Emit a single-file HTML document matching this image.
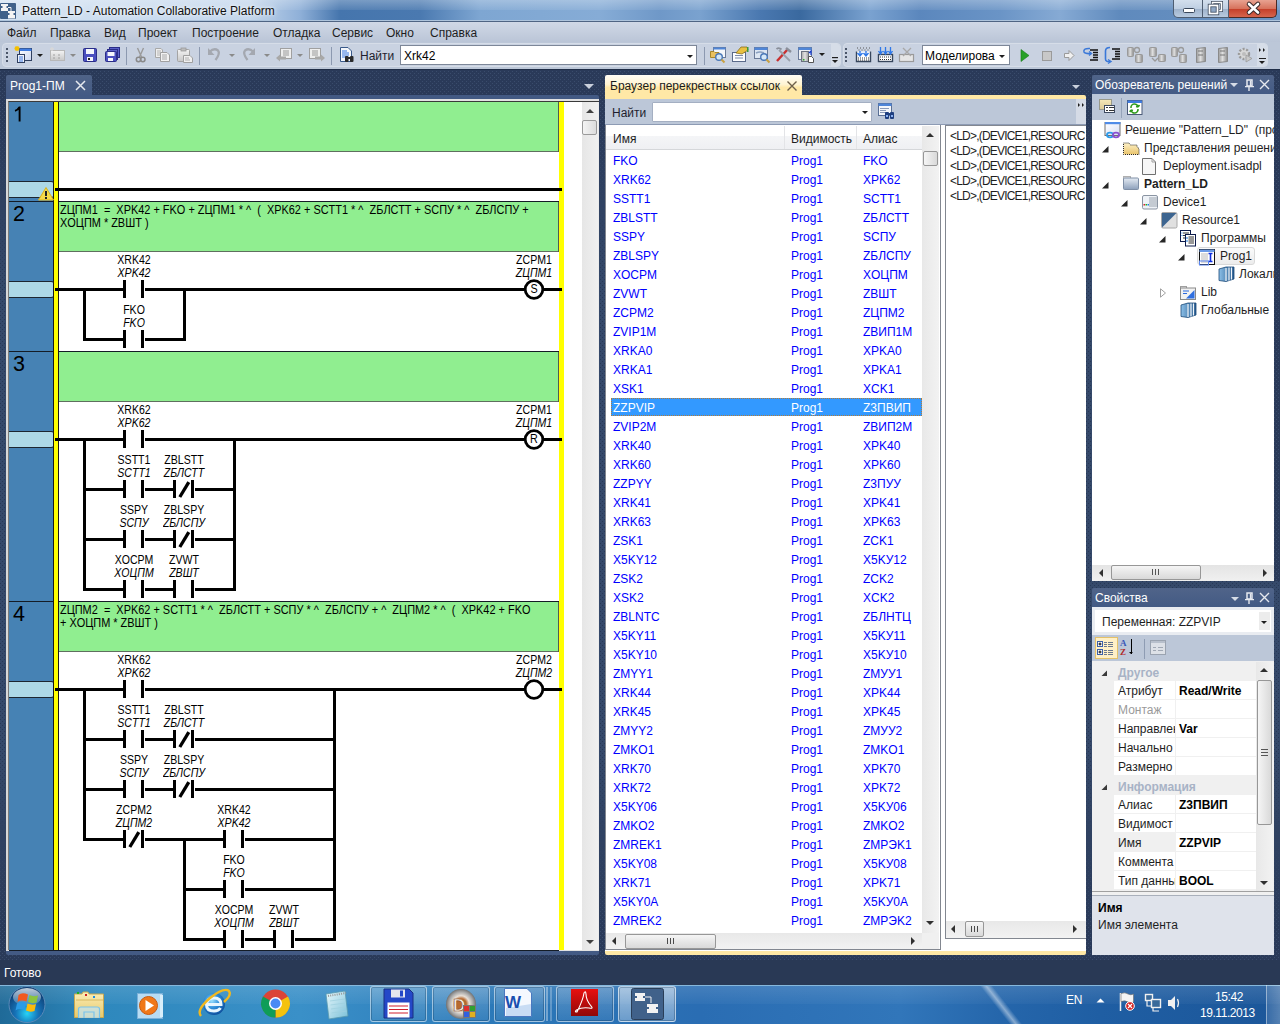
<!DOCTYPE html>
<html><head><meta charset="utf-8">
<style>
*{margin:0;padding:0;box-sizing:border-box}
html,body{width:1280px;height:1024px;overflow:hidden}
body{position:relative;font-family:"Liberation Sans",sans-serif;font-size:12px;color:#000;
background-color:#2a3a59;
background-image:conic-gradient(from 0deg at 1px 1px,transparent 0 270deg,#3a4c6c 270deg 360deg),conic-gradient(from 0deg at 1px 1px,transparent 0 270deg,#3a4c6c 270deg 360deg);
background-size:4px 4px,4px 4px;background-position:0 3px,2px 1px;}
.a{position:absolute}
.t{position:absolute;white-space:nowrap;line-height:1}
svg{position:absolute}

</style></head><body>
<div class="a" style="left:0;top:0;width:1280px;height:1024px;background-color:#35496a;background-image:conic-gradient(from 0deg at 1px 1px,transparent 0 270deg,#283856 270deg 360deg),conic-gradient(from 0deg at 1px 1px,transparent 0 270deg,#283856 270deg 360deg);background-size:4px 4px,4px 4px;background-position:0 3px,2px 1px;-webkit-mask-image:linear-gradient(transparent 110px,#000 290px,#000 750px,transparent 935px);mask-image:linear-gradient(transparent 110px,#000 290px,#000 750px,transparent 935px)"></div><div class="a" style="left:0px;top:0px;width:1280px;height:22px;background:linear-gradient(90deg,#d3e2f2 0,#c3d6ec 250px,#8fb0d8 300px,#4575ad 340px,#4a79b0 420px,#7ea6d2 480px,#86acd6 600px,#6f98c8 660px,#7aa2cf 700px,#4a78b0 760px,#3a699f 800px,#7aa2d0 870px,#5b87bd 920px,#6a94c6 1000px,#86aad4 1060px,#5f8abd 1120px,#6b93c2 1280px)"></div><div class="a" style="left:0px;top:0px;width:1280px;height:10px;background:linear-gradient(rgba(255,255,255,.28),rgba(255,255,255,.08))"></div><div class="a" style="left:0px;top:20px;width:1280px;height:1px;background:#aec4dc"></div><div class="a" style="left:0px;top:21px;width:1280px;height:1px;background:#4f6483"></div><svg style="left:0;top:3px" width="17" height="17"><rect x="0" y="0" width="16" height="16" rx="1" fill="#40618a"/><path d="M1 1 H8 V3 H6.5 V5 H8 V8 H1 V5 H2.5 V3 H1 Z" fill="#f4f4f4"/><path d="M8 4.5 H11 V8" stroke="#f4f4f4" fill="none"/><path d="M8 8 H15 V10 H13.5 V12 H15 V15.5 H8 V12 H9.5 V10 H8 Z" fill="#f4f4f4"/></svg><div class="t" style="left:22px;top:4.59px;font-size:12px;color:#101010;text-shadow:0 0 6px rgba(255,255,255,.9),0 0 3px rgba(255,255,255,.8)">Pattern_LD - Automation Collaborative Platform</div><div class="a" style="left:1173px;top:0px;width:30px;height:18px;background:linear-gradient(#d3dfed,#bfcfe2 50%,#9fb3cc 55%,#b9cbe0);border:1px solid #4e5d71;border-top:none;border-radius:0 0 0 5px"></div><div class="a" style="left:1203px;top:0px;width:26px;height:18px;background:linear-gradient(#d3dfed,#bfcfe2 50%,#9fb3cc 55%,#b9cbe0);border:1px solid #4e5d71;border-top:none;border-left:none"></div><div class="a" style="left:1229px;top:0px;width:48px;height:18px;background:linear-gradient(#e8a291,#d7735d 50%,#c5402a 55%,#d6654d);border:1px solid #4a2a25;border-top:none;border-left:none;border-radius:0 0 5px 0"></div><svg style="left:1180px;top:0" width="90" height="18"><rect x="3.5" y="8.5" width="11" height="4" rx="1" fill="#fff" stroke="#38465a"/><rect x="32.5" y="2.5" width="9" height="8" fill="none" stroke="#38465a" stroke-width="3"/><rect x="32.5" y="2.5" width="9" height="8" fill="none" stroke="#fff" stroke-width="1.6"/><rect x="29.5" y="5.5" width="8" height="8" fill="#8ea6c4" stroke="#38465a" stroke-width="3.4"/><rect x="29.5" y="5.5" width="8" height="8" fill="none" stroke="#fff" stroke-width="1.8"/><path d="M69 4 L78 12.5 M78 4 L69 12.5" stroke="#3a2a2a" stroke-width="4.6" stroke-linecap="round"/><path d="M69 4 L78 12.5 M78 4 L69 12.5" stroke="#fff" stroke-width="2.6" stroke-linecap="round"/></svg><div class="a" style="left:0px;top:22px;width:1280px;height:21px;background:linear-gradient(#d0d8e6,#b9c4d6)"></div><div class="t" style="left:7px;top:26.59px;font-size:12px;color:#1e1e1e;">Файл</div><div class="t" style="left:50px;top:26.59px;font-size:12px;color:#1e1e1e;">Правка</div><div class="t" style="left:104px;top:26.59px;font-size:12px;color:#1e1e1e;">Вид</div><div class="t" style="left:138px;top:26.59px;font-size:12px;color:#1e1e1e;">Проект</div><div class="t" style="left:192px;top:26.59px;font-size:12px;color:#1e1e1e;">Построение</div><div class="t" style="left:273px;top:26.59px;font-size:12px;color:#1e1e1e;">Отладка</div><div class="t" style="left:332px;top:26.59px;font-size:12px;color:#1e1e1e;">Сервис</div><div class="t" style="left:386px;top:26.59px;font-size:12px;color:#1e1e1e;">Окно</div><div class="t" style="left:430px;top:26.59px;font-size:12px;color:#1e1e1e;">Справка</div><div class="a" style="left:0px;top:42px;width:1280px;height:27px;background:#bcc7d8"></div><div class="a" style="left:2px;top:43px;width:839px;height:24px;background:#c9d2e1;border:1px solid #d6dde8;border-radius:4px"></div><div class="a" style="left:831px;top:44px;width:9px;height:22px;background:#d6dde8;border-radius:0 3px 3px 0"></div><div class="a" style="left:843px;top:43px;width:425px;height:24px;background:#c9d2e1;border:1px solid #d6dde8;border-radius:4px"></div><div class="a" style="left:1257px;top:44px;width:10px;height:22px;background:#d6dde8;border-radius:0 3px 3px 0"></div><div class="a" style="left:6px;top:48px;width:2px;height:2px;background:#4a5568"></div><div class="a" style="left:6px;top:52px;width:2px;height:2px;background:#4a5568"></div><div class="a" style="left:6px;top:56px;width:2px;height:2px;background:#4a5568"></div><div class="a" style="left:6px;top:60px;width:2px;height:2px;background:#4a5568"></div><div class="a" style="left:845px;top:48px;width:2px;height:2px;background:#4a5568"></div><div class="a" style="left:845px;top:52px;width:2px;height:2px;background:#4a5568"></div><div class="a" style="left:845px;top:56px;width:2px;height:2px;background:#4a5568"></div><div class="a" style="left:845px;top:60px;width:2px;height:2px;background:#4a5568"></div><svg style="left:0;top:40px" width="1280" height="30" viewBox="0 40 1280 30"><defs><linearGradient id="tg1" x1="0" y1="0" x2="0" y2="1"><stop offset="0" stop-color="#f4f4f4"/><stop offset="1" stop-color="#c8c8c8"/></linearGradient><linearGradient id="tg2" x1="0" y1="0" x2="1" y2="1"><stop offset="0" stop-color="#ffffff"/><stop offset="1" stop-color="#c9d6f0"/></linearGradient></defs><rect x="19.5" y="48.5" width="12" height="12" fill="url(#tg2)" stroke="#2f3f5f"/><rect x="19.5" y="48.5" width="12" height="2.5" fill="#3f7be0"/><path d="M17 46 V51 M14.5 48.5 H19.5 M15.2 46.7 L18.8 50.3 M18.8 46.7 L15.2 50.3" stroke="#f5c000" stroke-width="1.3"/><rect x="17.5" y="54.5" width="7" height="8" fill="#eef2fb" stroke="#2f3f5f"/><path d="M19 57 H23 M19 59 H23 M19 61 H23" stroke="#3f7be0"/><path d="M37 54 H43 L40 57 Z" fill="#1e1e1e"/><rect x="50.5" y="50.5" width="14" height="10" fill="url(#tg1)" stroke="#b8b8b8"/><path d="M53 55 h2 M58 55 h2 M53 58 h2 M58 58 h2" stroke="#a0a0a0"/><path d="M52 47 V51 M50 49 H54" stroke="#d8d8d8" stroke-width="1.3"/><path d="M70 54 H76 L73 57 Z" fill="#8a8a8a"/><rect x="83.5" y="48.5" width="13" height="13" rx="1" fill="#4a4fbf" stroke="#2a2d88"/><rect x="86" y="49" width="8" height="5" fill="#f4f6fc"/><rect x="87" y="57" width="6" height="4" fill="#f4f6fc"/><rect x="88" y="58" width="2" height="2" fill="#222"/><rect x="109.5" y="47.5" width="10" height="10" fill="#5a60c8" stroke="#2a2d88"/><rect x="107.5" y="49.5" width="10" height="10" fill="#5a60c8" stroke="#2a2d88"/><rect x="105.5" y="51.5" width="11" height="10" rx="1" fill="#4a4fbf" stroke="#2a2d88"/><rect x="107.5" y="52" width="7" height="4" fill="#f4f6fc"/><rect x="108" y="58" width="5" height="3" fill="#f4f6fc"/><path d="M137.5 48 L141.5 57 M143.5 48 L139.5 57" stroke="#9a9a9a" stroke-width="1.4"/><circle cx="138.5" cy="59.5" r="2.2" fill="none" stroke="#8a8a8a" stroke-width="1.5"/><circle cx="142.8" cy="59.5" r="2.2" fill="none" stroke="#8a8a8a" stroke-width="1.5"/><path d="M155.5 48.5 H161 L162.5 50 V57.5 H155.5 Z" fill="#eeeeee" stroke="#a8a8a8"/><path d="M157 51 H161 M157 53 H161 M157 55 H161" stroke="#b4b4b4"/><path d="M160.5 52.5 H167 L169.5 55 V61.5 H160.5 Z" fill="#f2f2f2" stroke="#a0a0a0"/><path d="M162 55 H167 M162 57 H167 M162 59 H167" stroke="#a8a8a8"/><rect x="177.5" y="49.5" width="12" height="12" rx="1" fill="url(#tg1)" stroke="#a4a4a4"/><rect x="181" y="48" width="5" height="3" fill="#bdbdbd" stroke="#9a9a9a" stroke-width=".8"/><path d="M183.5 55.5 H190 L192.5 58 V62.5 H183.5 Z" fill="#f0f0f0" stroke="#a0a0a0"/><path d="M185 58 H189 M185 60 H190" stroke="#b0b0b0"/><path d="M209.5 52 Q214 47.5 218 50.5 Q220.5 53.5 215.5 60" fill="none" stroke="#a4a8b0" stroke-width="2.3"/><path d="M208 48 V55 H214.5 Z" fill="#a4a8b0"/><path d="M229 54 H235 L232 57 Z" fill="#8a8a8a"/><path d="M253.5 52 Q249 47.5 245 50.5 Q242.5 53.5 247.5 60" fill="none" stroke="#a4a8b0" stroke-width="2.3"/><path d="M255 48 V55 H248.5 Z" fill="#a4a8b0"/><path d="M264 54 H270 L267 57 Z" fill="#8a8a8a"/><rect x="280.5" y="48.5" width="11" height="10" fill="#eeeeee" stroke="#a0a0a0"/><path d="M283 51 H289 M283 53 H289 M283 55 H289" stroke="#9a9a9a"/><path d="M276 58 L280 54.5 V56.5 H286 V59.5 H280 V61.5 Z" fill="#a8a8a8"/><path d="M297 54 H303 L300 57 Z" fill="#8a8a8a"/><rect x="309.5" y="48.5" width="11" height="10" fill="#eeeeee" stroke="#a0a0a0"/><path d="M312 51 H318 M312 53 H318 M312 55 H318" stroke="#9a9a9a"/><path d="M325 58 L321 54.5 V56.5 H315 V59.5 H321 V61.5 Z" fill="#a8a8a8"/><path d="M340.5 47.5 H348 L351.5 51 V61.5 H340.5 Z" fill="#f4f7fc" stroke="#3a5a8a"/><path d="M342 51 H347 M342 53 H349 M342 55 H349 M342 57 H347" stroke="#3a78e0"/><rect x="345" y="56" width="3.5" height="6" rx="1" fill="#2a2a2a"/><rect x="350" y="56" width="3.5" height="6" rx="1" fill="#2a2a2a"/><rect x="347.5" y="57" width="3" height="2" fill="#2a2a2a"/></svg><div class="a" style="left:126px;top:47px;width:1px;height:18px;background:#8c99b0"></div><div class="a" style="left:199px;top:47px;width:1px;height:18px;background:#8c99b0"></div><div class="a" style="left:331px;top:47px;width:1px;height:18px;background:#8c99b0"></div><div class="t" style="left:360px;top:49.59px;font-size:12px;color:#1e1e2e;">Найти</div><div class="a" style="left:400px;top:45px;width:297px;height:20px;background:#fff;border:1px solid #7d8798"></div><div class="t" style="left:404px;top:49.59px;font-size:12px;color:#000;">Xrk42</div><div class="a" style="left:687px;top:55px;width:0;height:0;border-left:3px solid transparent;border-right:3px solid transparent;border-top:3px solid #1e1e1e"></div><div class="a" style="left:704px;top:47px;width:1px;height:18px;background:#8c99b0"></div><svg style="left:0;top:40px" width="1280" height="30" viewBox="0 40 1280 30"><defs><linearGradient id="gs" x1="0" y1="0" x2="1" y2="0"><stop offset="0" stop-color="#a8a8a8"/><stop offset=".5" stop-color="#e4e4e4"/><stop offset="1" stop-color="#9a9a9a"/></linearGradient></defs><rect x="713.5" y="47.5" width="12" height="10" fill="#f4f7fb" stroke="#6a7a98"/><rect x="713.5" y="47.5" width="12" height="2" fill="#4f86d8"/><path d="M710.5 51.5 H714 L715 52.5 H719 V57.5 H710.5 Z" fill="#e9c060" stroke="#a8882c"/><circle cx="719" cy="57" r="3.3" fill="#d5e8f8" stroke="#4a78b8" stroke-width="1.4"/><path d="M721.5 59.5 L724.5 62.5" stroke="#c8a040" stroke-width="2"/><rect x="732.5" y="52.5" width="13" height="9" fill="#fbfcfe" stroke="#5a6a8a"/><path d="M735 55.5 H743 M735 58 H743" stroke="#7a8aa8"/><path d="M736 53 L741 47 L747 47 L748 50 L742 54 Z" fill="#e8c040" stroke="#8a7020" stroke-width=".8"/><rect x="747" y="47" width="1.5" height="5" fill="#3a9a3a"/><rect x="754.5" y="47.5" width="13" height="11" fill="#dde6f2" stroke="#6a7a98"/><rect x="754.5" y="47.5" width="13" height="2.5" fill="#4f86d8"/><path d="M756 53 Q760 51 764 53" stroke="#8aa0c0" stroke-width="1.5" fill="none"/><circle cx="764" cy="57" r="3.3" fill="#d5e8f8" stroke="#4a78b8" stroke-width="1.4"/><path d="M766.5 59.5 L769.5 62.5" stroke="#c8a040" stroke-width="2"/><path d="M777 61 L788 49" stroke="#c83030" stroke-width="2.4"/><path d="M779 50 L790 61" stroke="#9aa0aa" stroke-width="1.8"/><path d="M776.5 49 Q779 47 781.5 49.5" stroke="#8a8f9a" stroke-width="1.8" fill="none"/><path d="M786 48 L791 52" stroke="#8a8f9a" stroke-width="2.5"/><rect x="798.5" y="47.5" width="13" height="12" fill="#eef1f6" stroke="#6a7a98"/><rect x="798.5" y="47.5" width="13" height="2.5" fill="#4f86d8"/><rect x="801.5" y="51.5" width="7" height="10" fill="url(#gs)" stroke="#6a7280"/><rect x="803" y="59" width="1.5" height="1.5" fill="#30b030"/><path d="M808.5 56.5 H811.5 L813.5 58.5 V62.5 H808.5 Z" fill="#fff" stroke="#555"/><path d="M811 55 V51 L809 53" stroke="#1a3fd0" stroke-width="1.2" fill="none"/><path d="M819 53 H825 L822 56 Z" fill="#1e1e1e"/><rect x="832" y="57" width="6" height="1.2" fill="#1e1e1e"/><path d="M832 60 H838 L835 63 Z" fill="#1e1e1e"/><path d="M856.5 51.5 V61.5 H870.5 V51.5" fill="#fff" stroke="#37465c" stroke-width="1.4"/><path d="M858 58 h1 M860 58 h1 M862 58 h1 M864 58 h1 M866 58 h1 M868 58 h1 M858 60 h1 M860 60 h1 M862 60 h1 M864 60 h1 M866 60 h1 M868 60 h1" stroke="#333"/><path d="M857 48 h1 M860 48 h1 M863 48 h1 M866 48 h1 M869 48 h1 M858.5 50 h1 M861.5 50 h1 M864.5 50 h1 M867.5 50 h1" stroke="#555"/><path d="M860 51 V55 M857.5 53 L860 56 L862.5 53 M866 51 V55 M863.5 53 L866 56 L868.5 53" stroke="#2f78e8" stroke-width="1.4" fill="none"/><rect x="878.5" y="54.5" width="14" height="7" fill="#fff" stroke="#37465c" stroke-width="1.4"/><path d="M880 57 h1 M882 57 h1 M884 57 h1 M886 57 h1 M888 57 h1 M890 57 h1 M880 59.5 h1 M882 59.5 h1 M884 59.5 h1 M886 59.5 h1 M888 59.5 h1 M890 59.5 h1" stroke="#333"/><path d="M880.5 47 V53 M878.5 51 L880.5 54 L882.5 51 M885.5 47 V53 M883.5 51 L885.5 54 L887.5 51 M890.5 47 V53 M888.5 51 L890.5 54 L892.5 51" stroke="#2f78e8" stroke-width="1.3" fill="none"/><rect x="899.5" y="54.5" width="14" height="7" fill="#e6e6e6" stroke="#9a9a9a" stroke-width="1.2"/><path d="M903 48 L911 56 M911 48 L903 56" stroke="#a8a8a8" stroke-width="1.3"/></svg><div class="a" style="left:922px;top:45px;width:88px;height:20px;background:#fff;border:1px solid #7d8798"></div><div class="t" style="left:925px;top:49.59px;font-size:12px;color:#000;">Моделирова</div><div class="a" style="left:999px;top:55px;width:0;height:0;border-left:3px solid transparent;border-right:3px solid transparent;border-top:3px solid #1e1e1e"></div><svg style="left:1000px;top:40px" width="280" height="30" viewBox="1000 40 280 30"><defs><linearGradient id="gs2" x1="0" y1="0" x2="1" y2="0"><stop offset="0" stop-color="#9a9a9a"/><stop offset=".45" stop-color="#e0e0e0"/><stop offset="1" stop-color="#8a8a8a"/></linearGradient></defs><path d="M1021 49.5 L1029 55.5 L1021 61.5 Z" fill="#28a028" stroke="#1a7a1a" stroke-width=".6"/><rect x="1042.5" y="51.5" width="9" height="9" fill="#c8c8c8" stroke="#9a9a9a"/><path d="M1064.5 53.5 H1069 V50.5 L1074 55.5 L1069 60.5 V57.5 H1064.5 Z" fill="#f0f0f0" stroke="#9a9a9a"/><path d="M1090 50 H1098 M1093 52.5 H1098 M1093 55 H1098 M1093 57.5 H1098 M1090 60 H1098" stroke="#111" stroke-width="1.3"/><path d="M1090 48.5 Q1083 48 1084 52 Q1085 54 1091 53.5" stroke="#3a78d8" stroke-width="1.6" fill="none"/><path d="M1089 51.5 L1091.5 53.5 L1089 55.5" stroke="#3a78d8" stroke-width="1.4" fill="none"/><path d="M1112 49 H1120 M1115 51.5 H1120 M1115 54 H1120 M1115 56.5 H1120 M1112 59 H1120" stroke="#111" stroke-width="1.3"/><path d="M1110 47.5 Q1105.5 47.5 1105.5 51 V59 Q1105.5 62 1110 61.5" stroke="#3a78d8" stroke-width="1.6" fill="none"/><path d="M1108 59.5 L1111 61.5 L1108 63.5" stroke="#3a78d8" stroke-width="1.4" fill="none"/><rect x="1127.5" y="47.5" width="6" height="9" rx="1" fill="url(#gs2)" stroke="#9a9a9a"/><rect x="1135.5" y="54.5" width="7" height="8" rx="1" fill="url(#gs2)" stroke="#9a9a9a"/><circle cx="1137" cy="50" r="2.5" fill="none" stroke="#9a9a9a" stroke-width="1.3"/><rect x="1149.5" y="47.5" width="7" height="9" rx="1" fill="url(#gs2)" stroke="#9a9a9a"/><rect x="1158.5" y="54.5" width="7" height="7" rx="1" fill="url(#gs2)" stroke="#9a9a9a"/><path d="M1152 58 L1155 61 L1158 58" stroke="#9a9a9a" stroke-width="1.3" fill="none"/><rect x="1171.5" y="47.5" width="6" height="9" rx="1" fill="url(#gs2)" stroke="#9a9a9a"/><rect x="1179.5" y="54.5" width="7" height="8" rx="1" fill="url(#gs2)" stroke="#9a9a9a"/><circle cx="1181" cy="50" r="2.5" fill="none" stroke="#9a9a9a" stroke-width="1.3"/><path d="M1196.5 48.5 L1205.5 47.5 V61.5 L1196.5 62.5 Z" fill="url(#gs2)" stroke="#8a8a8a"/><path d="M1198 51 H1203 M1198 55 H1203" stroke="#777"/><path d="M1218.5 48.5 L1227.5 47.5 V61.5 L1218.5 62.5 Z" fill="url(#gs2)" stroke="#8a8a8a"/><path d="M1220 51 H1225 M1220 55 H1225" stroke="#777"/><circle cx="1244" cy="54" r="5" fill="#d8d8d8" stroke="#9a9a9a" stroke-width="2.4" stroke-dasharray="2 1.6"/><circle cx="1244" cy="54" r="2" fill="#bdbdbd"/><path d="M1246 55 L1252 58.5 L1246 62 Z" fill="#c8c8c8" stroke="#9a9a9a" stroke-width=".8"/></svg><div class="a" style="left:1259px;top:48px;width:0;height:0;border-top:2px solid transparent;border-bottom:2px solid transparent;border-left:2px solid #1e1e1e"></div><div class="a" style="left:1263px;top:48px;width:0;height:0;border-top:2px solid transparent;border-bottom:2px solid transparent;border-left:2px solid #1e1e1e"></div><div class="a" style="left:1259px;top:58px;width:7px;height:1px;background:#1e1e1e"></div><div class="a" style="left:1259px;top:61px;width:0;height:0;border-left:3px solid transparent;border-right:3px solid transparent;border-top:3px solid #1e1e1e"></div><div class="a" style="left:0px;top:69px;width:1280px;height:1px;background:#1f2d47"></div>
<div class="a" id="ptab" style="left:6px;top:75px;width:86px;height:21px;background:linear-gradient(#4f6387,#435a84);border-radius:2px 2px 0 0"></div>
<div class="t" style="left:10px;top:80px;color:#fff;font-size:12px">Prog1-ПМ</div>
<svg style="left:75px;top:80px" width="11" height="11"><path d="M1 1 L10 10 M10 1 L1 10" stroke="#e6e9ef" stroke-width="1.5"/></svg>
<div class="a" style="left:6px;top:95px;width:593px;height:860px;background:#435a84;border-radius:0 2px 2px 2px"></div>
<div class="a" style="left:6px;top:99px;width:593px;height:852px;background:#ebebeb;border-top:2px solid #e2e2e2;border-left:2px solid #d8d8d8;border-bottom:1px solid #e2e2e2"></div>
<div class="a" style="left:8px;top:101px;width:591px;height:849px;border-top:1px solid #3a3a3a;border-left:1px solid #7a7a7a"></div>
<svg class="a" style="left:6px;top:99px" width="577" height="852" viewBox="6 99 577 852"><rect x="9" y="102" width="574" height="848" fill="#fff" /><rect x="9" y="102" width="44" height="99" fill="#4682b4" /><rect x="59" y="102" width="500" height="49" fill="#90ee90" /><rect x="59" y="151" width="500" height="1" fill="#5f6f5f" /><rect x="558" y="102" width="1" height="50" fill="#4f5f4f" /><rect x="9" y="201" width="550" height="1" fill="#141c26" /><path d="M19.6 106.5 V121.5 M19.6 107 Q18 110 15 110.8" fill="none" stroke="#000" stroke-width="1.9"/><path d="M9 181.5 H51 Q54.5 181.5 54.5 185 V194 Q54.5 197.5 51 197.5 H9 Z" fill="#add8e6"/><path d="M9 181.5 H51 Q54.5 181.5 54.5 185 V194 Q54.5 197.5 51 197.5 H9" fill="none" stroke="#1c2630" stroke-width="1.1"/><rect x="9" y="202" width="44" height="149" fill="#4682b4" /><rect x="59" y="202" width="500" height="49" fill="#90ee90" /><rect x="59" y="251" width="500" height="1" fill="#5f6f5f" /><rect x="558" y="202" width="1" height="50" fill="#4f5f4f" /><rect x="9" y="351" width="550" height="1" fill="#141c26" /><text x="13" y="221.2" font-family="Liberation Sans" font-size="21.5">2</text><path d="M9 281.5 H51 Q54.5 281.5 54.5 285 V294 Q54.5 297.5 51 297.5 H9 Z" fill="#add8e6"/><path d="M9 281.5 H51 Q54.5 281.5 54.5 285 V294 Q54.5 297.5 51 297.5 H9" fill="none" stroke="#1c2630" stroke-width="1.1"/><text x="60" y="214" font-family="Liberation Sans" font-size="12" font-size="12" style="white-space:pre" transform="translate(60 0) scale(0.913 1) translate(-60 0)">ZЦПМ1  =  XPK42 + FKO + ZЦПМ1 * ^  (  XPK62 + SCTT1 * ^  ZБЛСТТ + SCПУ * ^  ZБЛСПУ +</text><text x="60" y="227" font-family="Liberation Sans" font-size="12" font-size="12" style="white-space:pre" transform="translate(60 0) scale(0.913 1) translate(-60 0)">XOЦПМ * ZBШТ )</text><rect x="9" y="352" width="44" height="249" fill="#4682b4" /><rect x="59" y="352" width="500" height="49" fill="#90ee90" /><rect x="59" y="401" width="500" height="1" fill="#5f6f5f" /><rect x="558" y="352" width="1" height="50" fill="#4f5f4f" /><rect x="9" y="601" width="550" height="1" fill="#141c26" /><text x="13" y="371.2" font-family="Liberation Sans" font-size="21.5">3</text><path d="M9 431.5 H51 Q54.5 431.5 54.5 435 V444 Q54.5 447.5 51 447.5 H9 Z" fill="#add8e6"/><path d="M9 431.5 H51 Q54.5 431.5 54.5 435 V444 Q54.5 447.5 51 447.5 H9" fill="none" stroke="#1c2630" stroke-width="1.1"/><rect x="9" y="602" width="44" height="348" fill="#4682b4" /><rect x="59" y="602" width="500" height="49" fill="#90ee90" /><rect x="59" y="651" width="500" height="1" fill="#5f6f5f" /><rect x="558" y="602" width="1" height="50" fill="#4f5f4f" /><rect x="9" y="950" width="550" height="1" fill="#141c26" /><text x="13" y="621.2" font-family="Liberation Sans" font-size="21.5">4</text><path d="M9 681.5 H51 Q54.5 681.5 54.5 685 V694 Q54.5 697.5 51 697.5 H9 Z" fill="#add8e6"/><path d="M9 681.5 H51 Q54.5 681.5 54.5 685 V694 Q54.5 697.5 51 697.5 H9" fill="none" stroke="#1c2630" stroke-width="1.1"/><text x="60" y="614" font-family="Liberation Sans" font-size="12" font-size="12" style="white-space:pre" transform="translate(60 0) scale(0.913 1) translate(-60 0)">ZЦПМ2  =  XPK62 + SCTT1 * ^  ZБЛСТТ + SCПУ * ^  ZБЛСПУ + ^  ZЦПМ2 * ^  (  XPK42 + FKO</text><text x="60" y="627" font-family="Liberation Sans" font-size="12" font-size="12" style="white-space:pre" transform="translate(60 0) scale(0.913 1) translate(-60 0)">+ XOЦПМ * ZBШТ )</text><rect x="53" y="102" width="1" height="848" fill="#1a1a1a" /><rect x="54" y="102" width="4" height="848" fill="#ffff00" /><rect x="58" y="102" width="1" height="848" fill="#1a1a1a" /><rect x="559" y="102" width="5" height="848" fill="#ffff00" /><rect x="55" y="188" width="507" height="3" fill="#000" /><path d="M46 187.5 L53.5 200 H38.5 Z" fill="#f5d94a" stroke="#d9b21c" stroke-width="1" stroke-linejoin="round"/><rect x="45" y="191" width="2" height="5" fill="#222" /><rect x="45" y="197" width="2" height="2" fill="#222" /><rect x="55" y="288" width="69" height="3" fill="#000" /><rect x="145" y="288" width="380" height="3" fill="#000" /><rect x="543" y="288" width="19" height="3" fill="#000" /><rect x="83" y="288" width="3" height="53" fill="#000" /><rect x="183" y="288" width="3" height="53" fill="#000" /><rect x="84" y="338" width="40" height="3" fill="#000" /><rect x="145" y="338" width="40" height="3" fill="#000" /><rect x="123" y="280" width="3" height="18" fill="#000" /><rect x="141" y="280" width="3" height="18" fill="#000" /><clipPath id="c134_289"><rect x="113" y="249" width="43" height="40"/></clipPath><g clip-path="url(#c134_289)"><text x="134" y="264" text-anchor="middle" font-family="Liberation Sans" font-size="12" transform="translate(134 0) scale(0.88 1) translate(-134 0)">XRK42</text><text x="134" y="277" text-anchor="middle" font-family="Liberation Sans" font-size="12" font-style="italic" transform="translate(134 0) scale(0.88 1) translate(-134 0)">XPK42</text></g><rect x="123" y="330" width="3" height="18" fill="#000" /><rect x="141" y="330" width="3" height="18" fill="#000" /><clipPath id="c134_339"><rect x="113" y="299" width="43" height="40"/></clipPath><g clip-path="url(#c134_339)"><text x="134" y="314" text-anchor="middle" font-family="Liberation Sans" font-size="12" transform="translate(134 0) scale(0.88 1) translate(-134 0)">FKO</text><text x="134" y="327" text-anchor="middle" font-family="Liberation Sans" font-size="12" font-style="italic" transform="translate(134 0) scale(0.88 1) translate(-134 0)">FKO</text></g><circle cx="534" cy="289.5" r="8.8" fill="#fff" stroke="#000" stroke-width="2.8"/><text x="534" y="293.2" text-anchor="middle" font-family="Liberation Sans" font-size="12" font-size="11" transform="translate(534 0) scale(0.9 1) translate(-534 0)">S</text><clipPath id="c534_289"><rect x="513" y="249" width="43" height="40"/></clipPath><g clip-path="url(#c534_289)"><text x="534" y="264" text-anchor="middle" font-family="Liberation Sans" font-size="12" transform="translate(534 0) scale(0.88 1) translate(-534 0)">ZCPM1</text><text x="534" y="277" text-anchor="middle" font-family="Liberation Sans" font-size="12" font-style="italic" transform="translate(534 0) scale(0.88 1) translate(-534 0)">ZЦПМ1</text></g><rect x="55" y="438" width="69" height="3" fill="#000" /><rect x="145" y="438" width="380" height="3" fill="#000" /><rect x="543" y="438" width="19" height="3" fill="#000" /><rect x="83" y="438" width="3" height="153" fill="#000" /><rect x="233" y="438" width="3" height="153" fill="#000" /><rect x="123" y="430" width="3" height="18" fill="#000" /><rect x="141" y="430" width="3" height="18" fill="#000" /><clipPath id="c134_439"><rect x="113" y="399" width="43" height="40"/></clipPath><g clip-path="url(#c134_439)"><text x="134" y="414" text-anchor="middle" font-family="Liberation Sans" font-size="12" transform="translate(134 0) scale(0.88 1) translate(-134 0)">XRK62</text><text x="134" y="427" text-anchor="middle" font-family="Liberation Sans" font-size="12" font-style="italic" transform="translate(134 0) scale(0.88 1) translate(-134 0)">XPK62</text></g><rect x="84" y="488" width="40" height="3" fill="#000" /><rect x="145" y="488" width="29" height="3" fill="#000" /><rect x="195" y="488" width="40" height="3" fill="#000" /><rect x="123" y="480" width="3" height="18" fill="#000" /><rect x="141" y="480" width="3" height="18" fill="#000" /><clipPath id="c134_489"><rect x="113" y="449" width="43" height="40"/></clipPath><g clip-path="url(#c134_489)"><text x="134" y="464" text-anchor="middle" font-family="Liberation Sans" font-size="12" transform="translate(134 0) scale(0.88 1) translate(-134 0)">SSTT1</text><text x="134" y="477" text-anchor="middle" font-family="Liberation Sans" font-size="12" font-style="italic" transform="translate(134 0) scale(0.88 1) translate(-134 0)">SCTT1</text></g><rect x="173" y="480" width="3" height="18" fill="#000" /><rect x="191" y="480" width="3" height="18" fill="#000" /><line x1="179.8" y1="497" x2="188.8" y2="482.2" stroke="#000" stroke-width="3.3"/><clipPath id="c184_489"><rect x="163" y="449" width="43" height="40"/></clipPath><g clip-path="url(#c184_489)"><text x="184" y="464" text-anchor="middle" font-family="Liberation Sans" font-size="12" transform="translate(184 0) scale(0.88 1) translate(-184 0)">ZBLSTT</text><text x="184" y="477" text-anchor="middle" font-family="Liberation Sans" font-size="12" font-style="italic" transform="translate(184 0) scale(0.88 1) translate(-184 0)">ZБЛСТТ</text></g><rect x="84" y="538" width="40" height="3" fill="#000" /><rect x="145" y="538" width="29" height="3" fill="#000" /><rect x="195" y="538" width="40" height="3" fill="#000" /><rect x="123" y="530" width="3" height="18" fill="#000" /><rect x="141" y="530" width="3" height="18" fill="#000" /><clipPath id="c134_539"><rect x="113" y="499" width="43" height="40"/></clipPath><g clip-path="url(#c134_539)"><text x="134" y="514" text-anchor="middle" font-family="Liberation Sans" font-size="12" transform="translate(134 0) scale(0.88 1) translate(-134 0)">SSPY</text><text x="134" y="527" text-anchor="middle" font-family="Liberation Sans" font-size="12" font-style="italic" transform="translate(134 0) scale(0.88 1) translate(-134 0)">SCПУ</text></g><rect x="173" y="530" width="3" height="18" fill="#000" /><rect x="191" y="530" width="3" height="18" fill="#000" /><line x1="179.8" y1="547" x2="188.8" y2="532.2" stroke="#000" stroke-width="3.3"/><clipPath id="c184_539"><rect x="163" y="499" width="43" height="40"/></clipPath><g clip-path="url(#c184_539)"><text x="184" y="514" text-anchor="middle" font-family="Liberation Sans" font-size="12" transform="translate(184 0) scale(0.88 1) translate(-184 0)">ZBLSPY</text><text x="184" y="527" text-anchor="middle" font-family="Liberation Sans" font-size="12" font-style="italic" transform="translate(184 0) scale(0.88 1) translate(-184 0)">ZБЛСПУ</text></g><rect x="84" y="588" width="40" height="3" fill="#000" /><rect x="145" y="588" width="29" height="3" fill="#000" /><rect x="195" y="588" width="40" height="3" fill="#000" /><rect x="123" y="580" width="3" height="18" fill="#000" /><rect x="141" y="580" width="3" height="18" fill="#000" /><clipPath id="c134_589"><rect x="113" y="549" width="43" height="40"/></clipPath><g clip-path="url(#c134_589)"><text x="134" y="564" text-anchor="middle" font-family="Liberation Sans" font-size="12" transform="translate(134 0) scale(0.88 1) translate(-134 0)">XOCPM</text><text x="134" y="577" text-anchor="middle" font-family="Liberation Sans" font-size="12" font-style="italic" transform="translate(134 0) scale(0.88 1) translate(-134 0)">XOЦПМ</text></g><rect x="173" y="580" width="3" height="18" fill="#000" /><rect x="191" y="580" width="3" height="18" fill="#000" /><clipPath id="c184_589"><rect x="163" y="549" width="43" height="40"/></clipPath><g clip-path="url(#c184_589)"><text x="184" y="564" text-anchor="middle" font-family="Liberation Sans" font-size="12" transform="translate(184 0) scale(0.88 1) translate(-184 0)">ZVWT</text><text x="184" y="577" text-anchor="middle" font-family="Liberation Sans" font-size="12" font-style="italic" transform="translate(184 0) scale(0.88 1) translate(-184 0)">ZBШТ</text></g><circle cx="534" cy="439.5" r="8.8" fill="#fff" stroke="#000" stroke-width="2.8"/><text x="534" y="443.2" text-anchor="middle" font-family="Liberation Sans" font-size="12" font-size="11" transform="translate(534 0) scale(0.9 1) translate(-534 0)">R</text><clipPath id="c534_439"><rect x="513" y="399" width="43" height="40"/></clipPath><g clip-path="url(#c534_439)"><text x="534" y="414" text-anchor="middle" font-family="Liberation Sans" font-size="12" transform="translate(534 0) scale(0.88 1) translate(-534 0)">ZCPM1</text><text x="534" y="427" text-anchor="middle" font-family="Liberation Sans" font-size="12" font-style="italic" transform="translate(534 0) scale(0.88 1) translate(-534 0)">ZЦПМ1</text></g><rect x="55" y="688" width="69" height="3" fill="#000" /><rect x="145" y="688" width="380" height="3" fill="#000" /><rect x="543" y="688" width="19" height="3" fill="#000" /><rect x="83" y="688" width="3" height="153" fill="#000" /><rect x="333" y="688" width="3" height="253" fill="#000" /><rect x="123" y="680" width="3" height="18" fill="#000" /><rect x="141" y="680" width="3" height="18" fill="#000" /><clipPath id="c134_689"><rect x="113" y="649" width="43" height="40"/></clipPath><g clip-path="url(#c134_689)"><text x="134" y="664" text-anchor="middle" font-family="Liberation Sans" font-size="12" transform="translate(134 0) scale(0.88 1) translate(-134 0)">XRK62</text><text x="134" y="677" text-anchor="middle" font-family="Liberation Sans" font-size="12" font-style="italic" transform="translate(134 0) scale(0.88 1) translate(-134 0)">XPK62</text></g><rect x="84" y="738" width="40" height="3" fill="#000" /><rect x="145" y="738" width="29" height="3" fill="#000" /><rect x="195" y="738" width="140" height="3" fill="#000" /><rect x="123" y="730" width="3" height="18" fill="#000" /><rect x="141" y="730" width="3" height="18" fill="#000" /><clipPath id="c134_739"><rect x="113" y="699" width="43" height="40"/></clipPath><g clip-path="url(#c134_739)"><text x="134" y="714" text-anchor="middle" font-family="Liberation Sans" font-size="12" transform="translate(134 0) scale(0.88 1) translate(-134 0)">SSTT1</text><text x="134" y="727" text-anchor="middle" font-family="Liberation Sans" font-size="12" font-style="italic" transform="translate(134 0) scale(0.88 1) translate(-134 0)">SCTT1</text></g><rect x="173" y="730" width="3" height="18" fill="#000" /><rect x="191" y="730" width="3" height="18" fill="#000" /><line x1="179.8" y1="747" x2="188.8" y2="732.2" stroke="#000" stroke-width="3.3"/><clipPath id="c184_739"><rect x="163" y="699" width="43" height="40"/></clipPath><g clip-path="url(#c184_739)"><text x="184" y="714" text-anchor="middle" font-family="Liberation Sans" font-size="12" transform="translate(184 0) scale(0.88 1) translate(-184 0)">ZBLSTT</text><text x="184" y="727" text-anchor="middle" font-family="Liberation Sans" font-size="12" font-style="italic" transform="translate(184 0) scale(0.88 1) translate(-184 0)">ZБЛСТТ</text></g><rect x="84" y="788" width="40" height="3" fill="#000" /><rect x="145" y="788" width="29" height="3" fill="#000" /><rect x="195" y="788" width="140" height="3" fill="#000" /><rect x="123" y="780" width="3" height="18" fill="#000" /><rect x="141" y="780" width="3" height="18" fill="#000" /><clipPath id="c134_789"><rect x="113" y="749" width="43" height="40"/></clipPath><g clip-path="url(#c134_789)"><text x="134" y="764" text-anchor="middle" font-family="Liberation Sans" font-size="12" transform="translate(134 0) scale(0.88 1) translate(-134 0)">SSPY</text><text x="134" y="777" text-anchor="middle" font-family="Liberation Sans" font-size="12" font-style="italic" transform="translate(134 0) scale(0.88 1) translate(-134 0)">SCПУ</text></g><rect x="173" y="780" width="3" height="18" fill="#000" /><rect x="191" y="780" width="3" height="18" fill="#000" /><line x1="179.8" y1="797" x2="188.8" y2="782.2" stroke="#000" stroke-width="3.3"/><clipPath id="c184_789"><rect x="163" y="749" width="43" height="40"/></clipPath><g clip-path="url(#c184_789)"><text x="184" y="764" text-anchor="middle" font-family="Liberation Sans" font-size="12" transform="translate(184 0) scale(0.88 1) translate(-184 0)">ZBLSPY</text><text x="184" y="777" text-anchor="middle" font-family="Liberation Sans" font-size="12" font-style="italic" transform="translate(184 0) scale(0.88 1) translate(-184 0)">ZБЛСПУ</text></g><rect x="84" y="838" width="40" height="3" fill="#000" /><rect x="145" y="838" width="79" height="3" fill="#000" /><rect x="245" y="838" width="90" height="3" fill="#000" /><rect x="123" y="830" width="3" height="18" fill="#000" /><rect x="141" y="830" width="3" height="18" fill="#000" /><line x1="129.8" y1="847" x2="138.8" y2="832.2" stroke="#000" stroke-width="3.3"/><clipPath id="c134_839"><rect x="113" y="799" width="43" height="40"/></clipPath><g clip-path="url(#c134_839)"><text x="134" y="814" text-anchor="middle" font-family="Liberation Sans" font-size="12" transform="translate(134 0) scale(0.88 1) translate(-134 0)">ZCPM2</text><text x="134" y="827" text-anchor="middle" font-family="Liberation Sans" font-size="12" font-style="italic" transform="translate(134 0) scale(0.88 1) translate(-134 0)">ZЦПМ2</text></g><rect x="223" y="830" width="3" height="18" fill="#000" /><rect x="241" y="830" width="3" height="18" fill="#000" /><clipPath id="c234_839"><rect x="213" y="799" width="43" height="40"/></clipPath><g clip-path="url(#c234_839)"><text x="234" y="814" text-anchor="middle" font-family="Liberation Sans" font-size="12" transform="translate(234 0) scale(0.88 1) translate(-234 0)">XRK42</text><text x="234" y="827" text-anchor="middle" font-family="Liberation Sans" font-size="12" font-style="italic" transform="translate(234 0) scale(0.88 1) translate(-234 0)">XPK42</text></g><rect x="183" y="838" width="3" height="103" fill="#000" /><rect x="184" y="888" width="40" height="3" fill="#000" /><rect x="245" y="888" width="90" height="3" fill="#000" /><rect x="223" y="880" width="3" height="18" fill="#000" /><rect x="241" y="880" width="3" height="18" fill="#000" /><clipPath id="c234_889"><rect x="213" y="849" width="43" height="40"/></clipPath><g clip-path="url(#c234_889)"><text x="234" y="864" text-anchor="middle" font-family="Liberation Sans" font-size="12" transform="translate(234 0) scale(0.88 1) translate(-234 0)">FKO</text><text x="234" y="877" text-anchor="middle" font-family="Liberation Sans" font-size="12" font-style="italic" transform="translate(234 0) scale(0.88 1) translate(-234 0)">FKO</text></g><rect x="184" y="938" width="40" height="3" fill="#000" /><rect x="245" y="938" width="29" height="3" fill="#000" /><rect x="295" y="938" width="40" height="3" fill="#000" /><rect x="223" y="930" width="3" height="18" fill="#000" /><rect x="241" y="930" width="3" height="18" fill="#000" /><clipPath id="c234_939"><rect x="213" y="899" width="43" height="40"/></clipPath><g clip-path="url(#c234_939)"><text x="234" y="914" text-anchor="middle" font-family="Liberation Sans" font-size="12" transform="translate(234 0) scale(0.88 1) translate(-234 0)">XOCPM</text><text x="234" y="927" text-anchor="middle" font-family="Liberation Sans" font-size="12" font-style="italic" transform="translate(234 0) scale(0.88 1) translate(-234 0)">XOЦПМ</text></g><rect x="273" y="930" width="3" height="18" fill="#000" /><rect x="291" y="930" width="3" height="18" fill="#000" /><clipPath id="c284_939"><rect x="263" y="899" width="43" height="40"/></clipPath><g clip-path="url(#c284_939)"><text x="284" y="914" text-anchor="middle" font-family="Liberation Sans" font-size="12" transform="translate(284 0) scale(0.88 1) translate(-284 0)">ZVWT</text><text x="284" y="927" text-anchor="middle" font-family="Liberation Sans" font-size="12" font-style="italic" transform="translate(284 0) scale(0.88 1) translate(-284 0)">ZBШТ</text></g><circle cx="534" cy="689.5" r="8.8" fill="#fff" stroke="#000" stroke-width="2.8"/><clipPath id="c534_689"><rect x="513" y="649" width="43" height="40"/></clipPath><g clip-path="url(#c534_689)"><text x="534" y="664" text-anchor="middle" font-family="Liberation Sans" font-size="12" transform="translate(534 0) scale(0.88 1) translate(-534 0)">ZCPM2</text><text x="534" y="677" text-anchor="middle" font-family="Liberation Sans" font-size="12" font-style="italic" transform="translate(534 0) scale(0.88 1) translate(-534 0)">ZЦПМ2</text></g></svg>
<div class="a" style="left:582px;top:102px;width:16px;height:848px;background:linear-gradient(90deg,#e6e6e6,#f0f0f0)"></div>
<div class="a" style="left:586px;top:109px;width:0;height:0;border-left:4px solid transparent;border-right:4px solid transparent;border-bottom:4px solid #404040"></div>
<div class="a" style="left:582px;top:120px;width:15px;height:15px;border:1px solid #9a9a9a;border-radius:2px;background:linear-gradient(90deg,#f4f4f4,#dcdcdc)"></div>
<div class="a" style="left:586px;top:940px;width:0;height:0;border-left:4px solid transparent;border-right:4px solid transparent;border-top:4px solid #404040"></div>
<div class="a" style="left:584px;top:84px;width:0;height:0;border-left:5px solid transparent;border-right:5px solid transparent;border-top:5px solid #c9d0dc"></div>
<div class="a" style="left:605px;top:75px;width:197px;height:21px;background:linear-gradient(#fffcf4,#fff4d2 45%,#ffe8a6 60%,#ffe8a6);border-radius:2px 2px 0 0"></div><div class="t" style="left:610px;top:79.59px;font-size:12px;color:#1b1b1b;">Браузер перекрестных ссылок</div><svg style="left:786px;top:80px" width="12" height="12"><path d="M1.5 1.5 L10.5 10.5 M10.5 1.5 L1.5 10.5" stroke="#6e604a" stroke-width="1.4"/></svg><div class="a" style="left:1072px;top:85px;width:0;height:0;border-left:4px solid transparent;border-right:4px solid transparent;border-top:4px solid #c9d0dc"></div><div class="a" style="left:605px;top:95px;width:481px;height:4px;background:#ffe8a6;border-radius:0 2px 0 0"></div><div class="a" style="left:605px;top:951px;width:481px;height:4px;background:#ffe8a6;border-radius:0 0 2px 2px"></div><div class="a" style="left:605px;top:99px;width:481px;height:26px;background:#bcc7d8"></div><div class="a" style="left:1076px;top:99px;width:10px;height:25px;background:#d5dbe6"></div><div class="a" style="left:605px;top:124px;width:481px;height:1px;background:#8d9bb4"></div><div class="t" style="left:612px;top:106.59px;font-size:12px;color:#1e1e2e;">Найти</div><div class="a" style="left:652px;top:102px;width:220px;height:20px;background:#fff;border:1px solid #a4afc2;border-radius:1px"></div><div class="a" style="left:862px;top:111px;width:0;height:0;border-left:3px solid transparent;border-right:3px solid transparent;border-top:3px solid #1e1e1e"></div><svg style="left:878px;top:103px" width="18" height="18"><rect x="0.5" y="0.5" width="13" height="12" fill="#f4f7fb" stroke="#5a6f95"/><rect x="0.5" y="0.5" width="13" height="2.5" fill="#4f86d8"/><path d="M2 5.5 H11 M2 7.5 H8 M2 9.5 H8" stroke="#8a9ab8"/><rect x="7" y="9" width="4" height="7" rx="1" fill="#1f3f80"/><rect x="12" y="9" width="4" height="7" rx="1" fill="#1f3f80"/><rect x="9.5" y="10" width="4" height="2" fill="#1f3f80"/><rect x="8" y="12" width="2" height="2" fill="#8ab0f0"/><rect x="13" y="12" width="2" height="2" fill="#8ab0f0"/></svg><div class="a" style="left:1078px;top:103px;width:0;height:0;border-top:2px solid transparent;border-bottom:2px solid transparent;border-left:2px solid #1e1e1e"></div><div class="a" style="left:1082px;top:103px;width:0;height:0;border-top:2px solid transparent;border-bottom:2px solid transparent;border-left:2px solid #1e1e1e"></div><div class="a" style="left:605px;top:125px;width:481px;height:826px;background:#fff"></div><div class="a" style="left:605px;top:125px;width:336px;height:825px;border:1px solid #828790;border-top:none"></div><div class="a" style="left:606px;top:126px;width:316px;height:24px;background:linear-gradient(#fff 0,#fff 10px,#f4f5f7 10px,#eff0f3 23px);border-bottom:1px solid #d5d7da"></div><div class="a" style="left:784px;top:126px;width:1px;height:23px;background:#e3e4e7"></div><div class="a" style="left:856px;top:126px;width:1px;height:23px;background:#e3e4e7"></div><div class="t" style="left:613px;top:132.59px;font-size:12px;color:#1e1e1e;">Имя</div><div class="t" style="left:791px;top:132.59px;font-size:12px;color:#1e1e1e;">Видимость</div><div class="t" style="left:863px;top:132.59px;font-size:12px;color:#1e1e1e;">Алиас</div><div class="t" style="left:613px;top:154.59px;font-size:12px;color:#0000ff;">FKO</div><div class="t" style="left:791px;top:154.59px;font-size:12px;color:#0000ff;">Prog1</div><div class="t" style="left:863px;top:154.59px;font-size:12px;color:#0000ff;">FKO</div><div class="t" style="left:613px;top:173.59px;font-size:12px;color:#0000ff;">XRK62</div><div class="t" style="left:791px;top:173.59px;font-size:12px;color:#0000ff;">Prog1</div><div class="t" style="left:863px;top:173.59px;font-size:12px;color:#0000ff;">XPK62</div><div class="t" style="left:613px;top:192.59px;font-size:12px;color:#0000ff;">SSTT1</div><div class="t" style="left:791px;top:192.59px;font-size:12px;color:#0000ff;">Prog1</div><div class="t" style="left:863px;top:192.59px;font-size:12px;color:#0000ff;">SCTT1</div><div class="t" style="left:613px;top:211.59px;font-size:12px;color:#0000ff;">ZBLSTT</div><div class="t" style="left:791px;top:211.59px;font-size:12px;color:#0000ff;">Prog1</div><div class="t" style="left:863px;top:211.59px;font-size:12px;color:#0000ff;">ZБЛСТТ</div><div class="t" style="left:613px;top:230.59px;font-size:12px;color:#0000ff;">SSPY</div><div class="t" style="left:791px;top:230.59px;font-size:12px;color:#0000ff;">Prog1</div><div class="t" style="left:863px;top:230.59px;font-size:12px;color:#0000ff;">SCПУ</div><div class="t" style="left:613px;top:249.59px;font-size:12px;color:#0000ff;">ZBLSPY</div><div class="t" style="left:791px;top:249.59px;font-size:12px;color:#0000ff;">Prog1</div><div class="t" style="left:863px;top:249.59px;font-size:12px;color:#0000ff;">ZБЛСПУ</div><div class="t" style="left:613px;top:268.59px;font-size:12px;color:#0000ff;">XOCPM</div><div class="t" style="left:791px;top:268.59px;font-size:12px;color:#0000ff;">Prog1</div><div class="t" style="left:863px;top:268.59px;font-size:12px;color:#0000ff;">XOЦПМ</div><div class="t" style="left:613px;top:287.59px;font-size:12px;color:#0000ff;">ZVWT</div><div class="t" style="left:791px;top:287.59px;font-size:12px;color:#0000ff;">Prog1</div><div class="t" style="left:863px;top:287.59px;font-size:12px;color:#0000ff;">ZBШТ</div><div class="t" style="left:613px;top:306.59px;font-size:12px;color:#0000ff;">ZCPM2</div><div class="t" style="left:791px;top:306.59px;font-size:12px;color:#0000ff;">Prog1</div><div class="t" style="left:863px;top:306.59px;font-size:12px;color:#0000ff;">ZЦПМ2</div><div class="t" style="left:613px;top:325.59px;font-size:12px;color:#0000ff;">ZVIP1M</div><div class="t" style="left:791px;top:325.59px;font-size:12px;color:#0000ff;">Prog1</div><div class="t" style="left:863px;top:325.59px;font-size:12px;color:#0000ff;">ZBИП1M</div><div class="t" style="left:613px;top:344.59px;font-size:12px;color:#0000ff;">XRKA0</div><div class="t" style="left:791px;top:344.59px;font-size:12px;color:#0000ff;">Prog1</div><div class="t" style="left:863px;top:344.59px;font-size:12px;color:#0000ff;">XPKA0</div><div class="t" style="left:613px;top:363.59px;font-size:12px;color:#0000ff;">XRKA1</div><div class="t" style="left:791px;top:363.59px;font-size:12px;color:#0000ff;">Prog1</div><div class="t" style="left:863px;top:363.59px;font-size:12px;color:#0000ff;">XPKA1</div><div class="t" style="left:613px;top:382.59px;font-size:12px;color:#0000ff;">XSK1</div><div class="t" style="left:791px;top:382.59px;font-size:12px;color:#0000ff;">Prog1</div><div class="t" style="left:863px;top:382.59px;font-size:12px;color:#0000ff;">XCK1</div><div class="a" style="left:611px;top:398px;width:311px;height:18px;background:#3399ff;outline:1px dotted #b07c3a;outline-offset:-1px"></div><div class="t" style="left:613px;top:401.59px;font-size:12px;color:#fff;">ZZPVIP</div><div class="t" style="left:791px;top:401.59px;font-size:12px;color:#fff;">Prog1</div><div class="t" style="left:863px;top:401.59px;font-size:12px;color:#fff;">Z3ПВИП</div><div class="t" style="left:613px;top:420.59px;font-size:12px;color:#0000ff;">ZVIP2M</div><div class="t" style="left:791px;top:420.59px;font-size:12px;color:#0000ff;">Prog1</div><div class="t" style="left:863px;top:420.59px;font-size:12px;color:#0000ff;">ZBИП2M</div><div class="t" style="left:613px;top:439.59px;font-size:12px;color:#0000ff;">XRK40</div><div class="t" style="left:791px;top:439.59px;font-size:12px;color:#0000ff;">Prog1</div><div class="t" style="left:863px;top:439.59px;font-size:12px;color:#0000ff;">XPK40</div><div class="t" style="left:613px;top:458.59px;font-size:12px;color:#0000ff;">XRK60</div><div class="t" style="left:791px;top:458.59px;font-size:12px;color:#0000ff;">Prog1</div><div class="t" style="left:863px;top:458.59px;font-size:12px;color:#0000ff;">XPK60</div><div class="t" style="left:613px;top:477.59px;font-size:12px;color:#0000ff;">ZZPYY</div><div class="t" style="left:791px;top:477.59px;font-size:12px;color:#0000ff;">Prog1</div><div class="t" style="left:863px;top:477.59px;font-size:12px;color:#0000ff;">Z3ПУУ</div><div class="t" style="left:613px;top:496.59px;font-size:12px;color:#0000ff;">XRK41</div><div class="t" style="left:791px;top:496.59px;font-size:12px;color:#0000ff;">Prog1</div><div class="t" style="left:863px;top:496.59px;font-size:12px;color:#0000ff;">XPK41</div><div class="t" style="left:613px;top:515.59px;font-size:12px;color:#0000ff;">XRK63</div><div class="t" style="left:791px;top:515.59px;font-size:12px;color:#0000ff;">Prog1</div><div class="t" style="left:863px;top:515.59px;font-size:12px;color:#0000ff;">XPK63</div><div class="t" style="left:613px;top:534.59px;font-size:12px;color:#0000ff;">ZSK1</div><div class="t" style="left:791px;top:534.59px;font-size:12px;color:#0000ff;">Prog1</div><div class="t" style="left:863px;top:534.59px;font-size:12px;color:#0000ff;">ZCK1</div><div class="t" style="left:613px;top:553.59px;font-size:12px;color:#0000ff;">X5KY12</div><div class="t" style="left:791px;top:553.59px;font-size:12px;color:#0000ff;">Prog1</div><div class="t" style="left:863px;top:553.59px;font-size:12px;color:#0000ff;">X5KУ12</div><div class="t" style="left:613px;top:572.59px;font-size:12px;color:#0000ff;">ZSK2</div><div class="t" style="left:791px;top:572.59px;font-size:12px;color:#0000ff;">Prog1</div><div class="t" style="left:863px;top:572.59px;font-size:12px;color:#0000ff;">ZCK2</div><div class="t" style="left:613px;top:591.59px;font-size:12px;color:#0000ff;">XSK2</div><div class="t" style="left:791px;top:591.59px;font-size:12px;color:#0000ff;">Prog1</div><div class="t" style="left:863px;top:591.59px;font-size:12px;color:#0000ff;">XCK2</div><div class="t" style="left:613px;top:610.59px;font-size:12px;color:#0000ff;">ZBLNTC</div><div class="t" style="left:791px;top:610.59px;font-size:12px;color:#0000ff;">Prog1</div><div class="t" style="left:863px;top:610.59px;font-size:12px;color:#0000ff;">ZБЛНТЦ</div><div class="t" style="left:613px;top:629.59px;font-size:12px;color:#0000ff;">X5KY11</div><div class="t" style="left:791px;top:629.59px;font-size:12px;color:#0000ff;">Prog1</div><div class="t" style="left:863px;top:629.59px;font-size:12px;color:#0000ff;">X5KУ11</div><div class="t" style="left:613px;top:648.59px;font-size:12px;color:#0000ff;">X5KY10</div><div class="t" style="left:791px;top:648.59px;font-size:12px;color:#0000ff;">Prog1</div><div class="t" style="left:863px;top:648.59px;font-size:12px;color:#0000ff;">X5KУ10</div><div class="t" style="left:613px;top:667.59px;font-size:12px;color:#0000ff;">ZMYY1</div><div class="t" style="left:791px;top:667.59px;font-size:12px;color:#0000ff;">Prog1</div><div class="t" style="left:863px;top:667.59px;font-size:12px;color:#0000ff;">ZMУУ1</div><div class="t" style="left:613px;top:686.59px;font-size:12px;color:#0000ff;">XRK44</div><div class="t" style="left:791px;top:686.59px;font-size:12px;color:#0000ff;">Prog1</div><div class="t" style="left:863px;top:686.59px;font-size:12px;color:#0000ff;">XPK44</div><div class="t" style="left:613px;top:705.59px;font-size:12px;color:#0000ff;">XRK45</div><div class="t" style="left:791px;top:705.59px;font-size:12px;color:#0000ff;">Prog1</div><div class="t" style="left:863px;top:705.59px;font-size:12px;color:#0000ff;">XPK45</div><div class="t" style="left:613px;top:724.59px;font-size:12px;color:#0000ff;">ZMYY2</div><div class="t" style="left:791px;top:724.59px;font-size:12px;color:#0000ff;">Prog1</div><div class="t" style="left:863px;top:724.59px;font-size:12px;color:#0000ff;">ZMУУ2</div><div class="t" style="left:613px;top:743.59px;font-size:12px;color:#0000ff;">ZMKO1</div><div class="t" style="left:791px;top:743.59px;font-size:12px;color:#0000ff;">Prog1</div><div class="t" style="left:863px;top:743.59px;font-size:12px;color:#0000ff;">ZMKO1</div><div class="t" style="left:613px;top:762.59px;font-size:12px;color:#0000ff;">XRK70</div><div class="t" style="left:791px;top:762.59px;font-size:12px;color:#0000ff;">Prog1</div><div class="t" style="left:863px;top:762.59px;font-size:12px;color:#0000ff;">XPK70</div><div class="t" style="left:613px;top:781.59px;font-size:12px;color:#0000ff;">XRK72</div><div class="t" style="left:791px;top:781.59px;font-size:12px;color:#0000ff;">Prog1</div><div class="t" style="left:863px;top:781.59px;font-size:12px;color:#0000ff;">XPK72</div><div class="t" style="left:613px;top:800.59px;font-size:12px;color:#0000ff;">X5KY06</div><div class="t" style="left:791px;top:800.59px;font-size:12px;color:#0000ff;">Prog1</div><div class="t" style="left:863px;top:800.59px;font-size:12px;color:#0000ff;">X5KУ06</div><div class="t" style="left:613px;top:819.59px;font-size:12px;color:#0000ff;">ZMKO2</div><div class="t" style="left:791px;top:819.59px;font-size:12px;color:#0000ff;">Prog1</div><div class="t" style="left:863px;top:819.59px;font-size:12px;color:#0000ff;">ZMKO2</div><div class="t" style="left:613px;top:838.59px;font-size:12px;color:#0000ff;">ZMREK1</div><div class="t" style="left:791px;top:838.59px;font-size:12px;color:#0000ff;">Prog1</div><div class="t" style="left:863px;top:838.59px;font-size:12px;color:#0000ff;">ZMPЭK1</div><div class="t" style="left:613px;top:857.59px;font-size:12px;color:#0000ff;">X5KY08</div><div class="t" style="left:791px;top:857.59px;font-size:12px;color:#0000ff;">Prog1</div><div class="t" style="left:863px;top:857.59px;font-size:12px;color:#0000ff;">X5KУ08</div><div class="t" style="left:613px;top:876.59px;font-size:12px;color:#0000ff;">XRK71</div><div class="t" style="left:791px;top:876.59px;font-size:12px;color:#0000ff;">Prog1</div><div class="t" style="left:863px;top:876.59px;font-size:12px;color:#0000ff;">XPK71</div><div class="t" style="left:613px;top:895.59px;font-size:12px;color:#0000ff;">X5KY0A</div><div class="t" style="left:791px;top:895.59px;font-size:12px;color:#0000ff;">Prog1</div><div class="t" style="left:863px;top:895.59px;font-size:12px;color:#0000ff;">X5KУ0A</div><div class="t" style="left:613px;top:914.59px;font-size:12px;color:#0000ff;">ZMREK2</div><div class="t" style="left:791px;top:914.59px;font-size:12px;color:#0000ff;">Prog1</div><div class="t" style="left:863px;top:914.59px;font-size:12px;color:#0000ff;">ZMPЭK2</div><div class="a" style="left:922px;top:126px;width:17px;height:807px;background:linear-gradient(90deg,#e8e8e8,#f2f2f2)"></div><div class="a" style="left:926px;top:133px;width:0;height:0;border-left:4px solid transparent;border-right:4px solid transparent;border-bottom:4px solid #303030"></div><div class="a" style="left:923px;top:151px;width:15px;height:15px;border:1px solid #979797;border-radius:2px;background:linear-gradient(90deg,#f5f5f5,#d9d9d9)"></div><div class="a" style="left:926px;top:921px;width:0;height:0;border-left:4px solid transparent;border-right:4px solid transparent;border-top:4px solid #303030"></div><div class="a" style="left:606px;top:933px;width:316px;height:16px;background:linear-gradient(#e8e8e8,#f2f2f2)"></div><div class="a" style="left:922px;top:933px;width:17px;height:16px;background:#f0f0f0"></div><div class="a" style="left:612px;top:937px;width:0;height:0;border-top:4px solid transparent;border-bottom:4px solid transparent;border-right:4px solid #303030"></div><div class="a" style="left:625px;top:934px;width:91px;height:15px;border:1px solid #979797;border-radius:2px;background:linear-gradient(#f5f5f5,#d9d9d9)"></div><div class="a" style="left:667px;top:938px;width:1px;height:6px;background:#4a4a4a"></div><div class="a" style="left:670px;top:938px;width:1px;height:6px;background:#4a4a4a"></div><div class="a" style="left:673px;top:938px;width:1px;height:6px;background:#4a4a4a"></div><div class="a" style="left:911px;top:937px;width:0;height:0;border-top:4px solid transparent;border-bottom:4px solid transparent;border-left:4px solid #303030"></div><div class="a" style="left:945px;top:125px;width:141px;height:814px;border:1px solid #828790;border-top:1px solid #828790;border-right:none"></div><div class="a" style="left:946px;top:126px;width:139px;height:795px;overflow:hidden"><div class="t" style="left:4px;top:3.59px;font-size:12px;color:#1e1e1e;letter-spacing:-0.8px">&lt;LD&gt;,(DEVICE1,RESOURCE1,Prog1)</div><div class="t" style="left:4px;top:18.59px;font-size:12px;color:#1e1e1e;letter-spacing:-0.8px">&lt;LD&gt;,(DEVICE1,RESOURCE1,Prog1)</div><div class="t" style="left:4px;top:33.59px;font-size:12px;color:#1e1e1e;letter-spacing:-0.8px">&lt;LD&gt;,(DEVICE1,RESOURCE1,Prog1)</div><div class="t" style="left:4px;top:48.59px;font-size:12px;color:#1e1e1e;letter-spacing:-0.8px">&lt;LD&gt;,(DEVICE1,RESOURCE1,Prog1)</div><div class="t" style="left:4px;top:63.59px;font-size:12px;color:#1e1e1e;letter-spacing:-0.8px">&lt;LD&gt;,(DEVICE1,RESOURCE1,Prog1)</div></div><div class="a" style="left:946px;top:921px;width:140px;height:17px;background:linear-gradient(#e8e8e8,#f2f2f2)"></div><div class="a" style="left:951px;top:925px;width:0;height:0;border-top:4px solid transparent;border-bottom:4px solid transparent;border-right:4px solid #303030"></div><div class="a" style="left:965px;top:921px;width:19px;height:16px;border:1px solid #979797;border-radius:2px;background:linear-gradient(#f5f5f5,#d9d9d9)"></div><div class="a" style="left:971px;top:926px;width:1px;height:6px;background:#4a4a4a"></div><div class="a" style="left:974px;top:926px;width:1px;height:6px;background:#4a4a4a"></div><div class="a" style="left:977px;top:926px;width:1px;height:6px;background:#4a4a4a"></div><div class="a" style="left:1073px;top:925px;width:0;height:0;border-top:4px solid transparent;border-bottom:4px solid transparent;border-left:4px solid #303030"></div><div class="a" style="left:1092px;top:75px;width:182px;height:19px;background:linear-gradient(#506489,#435a84);border-radius:2px 2px 0 0"></div><div class="t" style="left:1095px;top:78.59px;font-size:12px;color:#fff;">Обозреватель решений</div><div class="a" style="left:1230px;top:83px;width:0;height:0;border-left:4px solid transparent;border-right:4px solid transparent;border-top:4px solid #d6dce6"></div><svg style="left:1244px;top:79px" width="10" height="13"><path d="M3 1 H8 V7 H3 Z" fill="none" stroke="#e6e9ef" stroke-width="1.5"/><path d="M6.5 1.5 V7" stroke="#e6e9ef" stroke-width="1.3"/><path d="M1 7.6 H10 M5 8 V12" stroke="#e6e9ef" stroke-width="1.4"/></svg><svg style="left:1259px;top:79px" width="11" height="11"><path d="M1 1 L10 10 M10 1 L1 10" stroke="#e6e9ef" stroke-width="1.4"/></svg><div class="a" style="left:1092px;top:94px;width:182px;height:26px;background:#bcc7d8"></div><div class="a" style="left:1099px;top:99px;width:13px;height:11px;background:linear-gradient(#f4e7b8,#dccb98);border:1px solid #9a9a8a"></div><div class="a" style="left:1104px;top:105px;width:11px;height:8px;background:#fff;border:1px solid #3d4a60"></div><div class="a" style="left:1106px;top:107px;width:2px;height:1px;background:#333"></div><div class="a" style="left:1109px;top:107px;width:5px;height:1px;background:#333"></div><div class="a" style="left:1106px;top:110px;width:2px;height:1px;background:#333"></div><div class="a" style="left:1109px;top:110px;width:5px;height:1px;background:#333"></div><div class="a" style="left:1121px;top:98px;width:1px;height:20px;background:#95a3b9"></div><svg style="left:1127px;top:100px" width="16" height="15" viewBox="0 0 16 15"><rect x="0.5" y="0.5" width="14.5" height="14" fill="#fff" stroke="#4a5a78"/><rect x="0.5" y="0.5" width="14.5" height="2.5" fill="#3f7be0"/><path d="M4 8 A3.5 3.5 0 0 1 11 7 M11 7 L12.5 5 M11 7 L9 6.5 M11 9 A3.5 3.5 0 0 1 4 10 M4 10 L2.8 12 M4 10 L6 10.6" fill="none" stroke="#2e9a1c" stroke-width="1.6"/></svg><div class="a" style="left:1092px;top:120px;width:182px;height:461px;background:#fff"></div><svg style="left:1104px;top:122px" width="17" height="17" viewBox="0 0 17 17"><defs><linearGradient id="sg" x1="0" y1="0" x2="1" y2="1"><stop offset="0" stop-color="#fff"/><stop offset="1" stop-color="#d8def5"/></linearGradient></defs><rect x="1" y="0.5" width="15" height="13" fill="url(#sg)" stroke="#707070"/><rect x="1" y="0" width="15.5" height="2.2" fill="#4f8be8"/><ellipse cx="6" cy="13" rx="3" ry="2.3" fill="none" stroke="#2b9ae8" stroke-width="1.8"/><ellipse cx="12" cy="13" rx="3" ry="2.3" fill="none" stroke="#8a4fd0" stroke-width="1.8"/></svg><div class="t" style="left:1125px;top:123.59px;font-size:12px;color:#1e1e1e;">Решение "Pattern_LD"&nbsp; (проект</div><svg style="left:1102px;top:146px" width="7" height="7"><path d="M6.5 0 V6.5 H0 Z" fill="#262626"/></svg><svg style="left:1123px;top:142px" width="17" height="14" viewBox="0 0 17 14"><defs><linearGradient id="fg" x1="0" y1="0" x2="0" y2="1"><stop offset="0" stop-color="#fdf1c8"/><stop offset="1" stop-color="#e9c36a"/></linearGradient></defs><path d="M0.5 1 H6 L7.5 3 H14 V5 L16 6.5 V12.5 H0.5 Z" fill="url(#fg)" stroke="#2a2a2a" stroke-width="1" stroke-dasharray="1 1"/></svg><div class="t" style="left:1144px;top:141.59px;font-size:12px;color:#1e1e1e;">Представления решения</div><svg style="left:1142px;top:158px" width="14" height="17" viewBox="0 0 14 17"><path d="M0.5 0.5 H10 L13.5 4 V16.5 H0.5 Z" fill="#f7f7f7" stroke="#707070"/><path d="M10 0.5 V4 H13.5" fill="none" stroke="#a0a0a0"/></svg><div class="t" style="left:1163px;top:159.59px;font-size:12px;color:#1e1e1e;">Deployment.isadpl</div><svg style="left:1102px;top:182px" width="7" height="7"><path d="M6.5 0 V6.5 H0 Z" fill="#262626"/></svg><svg style="left:1123px;top:176px" width="16" height="14" viewBox="0 0 16 14"><defs><linearGradient id="pg" x1="0" y1="0" x2="0" y2="1"><stop offset="0" stop-color="#e4ebf3"/><stop offset="1" stop-color="#8da0bb"/></linearGradient></defs><rect x="0.5" y="0.5" width="7" height="2" fill="#e8e8e8" stroke="#b0b0b0"/><rect x="0.5" y="2" width="15" height="11.5" rx="1" fill="url(#pg)" stroke="#7f8fa6"/></svg><div class="t" style="left:1144px;top:177.59px;font-size:12px;color:#1e1e1e;font-weight:bold">Pattern_LD</div><svg style="left:1121px;top:200px" width="7" height="7"><path d="M6.5 0 V6.5 H0 Z" fill="#262626"/></svg><svg style="left:1142px;top:195px" width="16" height="15" viewBox="0 0 16 15"><rect x="0.5" y="0.5" width="15" height="13.5" rx="1.5" fill="#eef2f7" stroke="#8a94a2"/><path d="M8 2 V12 M10 2 V12 M12 2 V12 M14 2 V12" stroke="#9aa3ae" stroke-width="1"/><rect x="1.5" y="9" width="1.5" height="1.5" fill="#e02020"/><rect x="3.5" y="9" width="1.5" height="1.5" fill="#20b020"/><rect x="5.5" y="9" width="1.5" height="1.5" fill="#2080e0"/></svg><div class="t" style="left:1163px;top:195.59px;font-size:12px;color:#1e1e1e;">Device1</div><svg style="left:1140px;top:218px" width="7" height="7"><path d="M6.5 0 V6.5 H0 Z" fill="#262626"/></svg><svg style="left:1161px;top:212px" width="17" height="17" viewBox="0 0 17 17"><rect x="0.5" y="0.5" width="15.5" height="15.5" rx="1.5" fill="#e0e0e0" stroke="#a8a8a8"/><path d="M1 1 H15.5 L1 15.5 Z" fill="#3d6590"/></svg><div class="t" style="left:1182px;top:213.59px;font-size:12px;color:#1e1e1e;">Resource1</div><svg style="left:1159px;top:236px" width="7" height="7"><path d="M6.5 0 V6.5 H0 Z" fill="#262626"/></svg><svg style="left:1180px;top:230px" width="17" height="17" viewBox="0 0 17 17"><rect x="0.5" y="0.5" width="10" height="11" fill="#fff" stroke="#0c1a4a"/><path d="M3 3 H9 M3 5.5 H9 M3 8 H9" stroke="#333"/><rect x="1.5" y="2.5" width="1" height="1" fill="#1a78e0"/><rect x="1.5" y="5" width="1" height="1" fill="#1a78e0"/><rect x="5.5" y="4.5" width="10" height="11.5" fill="#fff" stroke="#0c1a4a"/><path d="M8.5 7 H14 M8.5 9 H14 M8.5 11 H14 M8.5 13 H14" stroke="#333"/><rect x="6.5" y="7" width="1" height="2" fill="#1a78e0"/><rect x="6.5" y="10" width="1" height="2" fill="#1a78e0"/></svg><div class="t" style="left:1201px;top:231.59px;font-size:12px;color:#1e1e1e;">Программы</div><svg style="left:1178px;top:254px" width="7" height="7"><path d="M6.5 0 V6.5 H0 Z" fill="#262626"/></svg><div class="a" style="left:1197px;top:247px;width:58px;height:18px;border:1px solid #d9d9d9;border-radius:3px;background:linear-gradient(#fbfbfb,#ececec)"></div><svg style="left:1199px;top:249px" width="17" height="17" viewBox="0 0 17 17"><rect x="0.5" y="0.5" width="15" height="15" fill="#fff" stroke="#111"/><rect x="0.5" y="0.5" width="15" height="2.5" fill="#6b9ae6"/><path d="M2 5 H9 M2 7 H9 M2 9 H9 M2 11 H9 M2 13 H9" stroke="#b8b8b8"/><path d="M9.5 4.5 H13.5 M11.5 4.5 V12.5 M9.5 12.5 H13.5" stroke="#1030e0" stroke-width="1.6"/><rect x="0.5" y="12" width="9" height="4" fill="none" stroke="#5a86f0"/></svg><div class="t" style="left:1220px;top:249.59px;font-size:12px;color:#1e1e1e;">Prog1</div><svg style="left:1218px;top:266px" width="17" height="17" viewBox="0 0 17 17"><defs><linearGradient id="bg" x1="0" y1="0" x2="1" y2="0"><stop offset="0" stop-color="#8cc0e8"/><stop offset="1" stop-color="#24588c"/></linearGradient></defs><path d="M1 3 L8 1 L16 1 V13 L8 15.5 L1 14.5 Z" fill="url(#bg)" stroke="#1c4a78" stroke-width="0.8"/><path d="M8 2 V15 M11 1.5 V14.5 M13.5 1.5 V13.5" stroke="#f2f6fa" stroke-width="1.2"/></svg><div class="t" style="left:1239px;top:267.59px;font-size:12px;color:#1e1e1e;">Локальные</div><svg style="left:1160px;top:288px" width="7" height="11"><path d="M0.5 0.8 L5.5 5 L0.5 9.2 Z" fill="none" stroke="#a0a0a0"/></svg><svg style="left:1180px;top:286px" width="16" height="14" viewBox="0 0 16 14"><rect x="0.5" y="0.5" width="6" height="2" fill="#ececec" stroke="#a0a0a0"/><rect x="0.5" y="2" width="15" height="11.5" fill="#f2f2f2" stroke="#8a8a8a"/><path d="M3 5 H9 M3 7.5 H7" stroke="#2a6ae0" stroke-width="1"/><path d="M14.5 4 V12.5 H6 Z" fill="#2f6fe0"/></svg><div class="t" style="left:1201px;top:285.59px;font-size:12px;color:#1e1e1e;">Lib</div><svg style="left:1180px;top:302px" width="17" height="17" viewBox="0 0 17 17"><defs><linearGradient id="bg" x1="0" y1="0" x2="1" y2="0"><stop offset="0" stop-color="#8cc0e8"/><stop offset="1" stop-color="#24588c"/></linearGradient></defs><path d="M1 3 L8 1 L16 1 V13 L8 15.5 L1 14.5 Z" fill="url(#bg)" stroke="#1c4a78" stroke-width="0.8"/><path d="M8 2 V15 M11 1.5 V14.5 M13.5 1.5 V13.5" stroke="#f2f6fa" stroke-width="1.2"/></svg><div class="t" style="left:1201px;top:303.59px;font-size:12px;color:#1e1e1e;">Глобальные</div><div class="a" style="left:1274px;top:120px;width:6px;height:461px;background:#2a3a59;background-image:conic-gradient(from 0deg at 1px 1px,transparent 0 270deg,#3a4c6c 270deg 360deg),conic-gradient(from 0deg at 1px 1px,transparent 0 270deg,#3a4c6c 270deg 360deg);background-size:4px 4px,4px 4px;background-position:2px 3px,0 1px"></div><div class="a" style="left:1092px;top:565px;width:182px;height:16px;background:linear-gradient(#e4e4e4,#f0f0f0)"></div><div class="a" style="left:1099px;top:569px;width:0;height:0;border-top:4px solid transparent;border-bottom:4px solid transparent;border-right:4px solid #303030"></div><div class="a" style="left:1111px;top:565px;width:90px;height:15px;border:1px solid #979797;border-radius:2px;background:linear-gradient(#f5f5f5,#d9d9d9)"></div><div class="a" style="left:1152px;top:569px;width:1px;height:6px;background:#555"></div><div class="a" style="left:1155px;top:569px;width:1px;height:6px;background:#555"></div><div class="a" style="left:1158px;top:569px;width:1px;height:6px;background:#555"></div><div class="a" style="left:1263px;top:569px;width:0;height:0;border-top:4px solid transparent;border-bottom:4px solid transparent;border-left:4px solid #303030"></div><div class="a" style="left:1092px;top:588px;width:182px;height:19px;background:linear-gradient(#506489,#435a84);border-radius:2px 2px 0 0"></div><div class="t" style="left:1095px;top:591.59px;font-size:12px;color:#fff;">Свойства</div><div class="a" style="left:1231px;top:597px;width:0;height:0;border-left:4px solid transparent;border-right:4px solid transparent;border-top:4px solid #d6dce6"></div><svg style="left:1244px;top:592px" width="10" height="13"><path d="M3 1 H8 V7 H3 Z" fill="none" stroke="#e6e9ef" stroke-width="1.5"/><path d="M6.5 1.5 V7" stroke="#e6e9ef" stroke-width="1.3"/><path d="M1 7.6 H10 M5 8 V12" stroke="#e6e9ef" stroke-width="1.4"/></svg><svg style="left:1259px;top:592px" width="11" height="11"><path d="M1 1 L10 10 M10 1 L1 10" stroke="#e6e9ef" stroke-width="1.4"/></svg><div class="a" style="left:1092px;top:607px;width:182px;height:28px;background:#fff;border:3px solid #e9ecf1;border-top-width:3px"></div><div class="t" style="left:1102px;top:615.59px;font-size:12px;color:#1e1e1e;">Переменная: ZZPVIP</div><div class="a" style="left:1259px;top:612px;width:11px;height:18px;background:#ececec"></div><div class="a" style="left:1261px;top:621px;width:0;height:0;border-left:3px solid transparent;border-right:3px solid transparent;border-top:3px solid #1e1e1e"></div><div class="a" style="left:1092px;top:635px;width:182px;height:26px;background:#bcc7d8"></div><div class="a" style="left:1095px;top:637px;width:23px;height:22px;background:#fff0c6;border:1px solid #e3c16a"></div><svg style="left:1097px;top:640px" width="18" height="17"><rect x="0.5" y="1.5" width="5" height="5" fill="#fff" stroke="#3b5fa8"/><path d="M1.5 4 H4.5 M3 2.5 V5.5" stroke="#000"/><rect x="0.5" y="9.5" width="5" height="5" fill="#fff" stroke="#3b5fa8"/><path d="M1.5 12 H4.5 M3 10.5 V13.5" stroke="#000"/><path d="M7 2.5 H10 M11 2.5 H16 M7 4.5 H10 M11 4.5 H16 M7 6.5 H10 M11 6.5 H16 M7 10.5 H10 M11 10.5 H16 M7 12.5 H10 M11 12.5 H16 M7 14.5 H10 M11 14.5 H16" stroke="#6a7890"/></svg><div class="t" style="left:1120px;top:638.94px;font-size:9px;color:#3857b8;font-family:'Liberation Serif';font-weight:bold">A</div><div class="t" style="left:1120px;top:647.94px;font-size:9px;color:#b02a2a;font-family:'Liberation Serif';font-weight:bold">Z</div><div class="a" style="left:1131px;top:639px;width:1px;height:15px;background:#000"></div><div class="a" style="left:1129px;top:652px;width:0;height:0;border-left:2px solid transparent;border-right:2px solid transparent;border-top:2px solid #000"></div><div class="a" style="left:1144px;top:639px;width:1px;height:20px;background:#8e9cb3"></div><svg style="left:1150px;top:640px" width="17" height="16"><rect x="0.5" y="0.5" width="15" height="14" fill="#dde1e7" stroke="#9aa3b0"/><rect x="1" y="1" width="14" height="2" fill="#b8c0cc"/><path d="M3 7.5 H6 M8 7.5 H13 M3 10.5 H6 M8 10.5 H13" stroke="#a0a8b4"/></svg><div class="a" style="left:1092px;top:661px;width:182px;height:230px;background:#f0f0f0"></div><svg style="left:1101px;top:670px" width="7" height="7"><path d="M6 0.5 V6 H0.5 Z" fill="#3a3a3a"/></svg><div class="t" style="left:1118px;top:666.59px;font-size:12px;color:#a8b3c6;font-weight:bold">Другое</div><div class="a" style="left:1114px;top:681px;width:61px;height:18px;background:#fff"></div><div class="a" style="left:1176px;top:681px;width:80px;height:18px;background:#fff"></div><div class="a" style="left:1118px;top:681px;width:57px;height:18px;overflow:hidden"><div class="t" style="left:0px;top:3.59px;font-size:12px;color:#1e1e1e;">Атрибут</div></div><div class="t" style="left:1179px;top:684.59px;font-size:12px;color:#000;font-weight:bold">Read/Write</div><div class="a" style="left:1114px;top:700px;width:61px;height:18px;background:#fff"></div><div class="a" style="left:1176px;top:700px;width:80px;height:18px;background:#fff"></div><div class="a" style="left:1118px;top:700px;width:57px;height:18px;overflow:hidden"><div class="t" style="left:0px;top:3.59px;font-size:12px;color:#9a9a9a;">Монтаж</div></div><div class="a" style="left:1114px;top:719px;width:61px;height:18px;background:#fff"></div><div class="a" style="left:1176px;top:719px;width:80px;height:18px;background:#fff"></div><div class="a" style="left:1118px;top:719px;width:57px;height:18px;overflow:hidden"><div class="t" style="left:0px;top:3.59px;font-size:12px;color:#1e1e1e;">Направлен</div></div><div class="t" style="left:1179px;top:722.59px;font-size:12px;color:#000;font-weight:bold">Var</div><div class="a" style="left:1114px;top:738px;width:61px;height:18px;background:#fff"></div><div class="a" style="left:1176px;top:738px;width:80px;height:18px;background:#fff"></div><div class="a" style="left:1118px;top:738px;width:57px;height:18px;overflow:hidden"><div class="t" style="left:0px;top:3.59px;font-size:12px;color:#1e1e1e;">Начально</div></div><div class="a" style="left:1114px;top:757px;width:61px;height:18px;background:#fff"></div><div class="a" style="left:1176px;top:757px;width:80px;height:18px;background:#fff"></div><div class="a" style="left:1118px;top:757px;width:57px;height:18px;overflow:hidden"><div class="t" style="left:0px;top:3.59px;font-size:12px;color:#1e1e1e;">Размерно</div></div><svg style="left:1101px;top:784px" width="7" height="7"><path d="M6 0.5 V6 H0.5 Z" fill="#3a3a3a"/></svg><div class="t" style="left:1118px;top:780.59px;font-size:12px;color:#a8b3c6;font-weight:bold">Информация</div><div class="a" style="left:1114px;top:795px;width:61px;height:18px;background:#fff"></div><div class="a" style="left:1176px;top:795px;width:80px;height:18px;background:#fff"></div><div class="a" style="left:1118px;top:795px;width:57px;height:18px;overflow:hidden"><div class="t" style="left:0px;top:3.59px;font-size:12px;color:#1e1e1e;">Алиас</div></div><div class="t" style="left:1179px;top:798.59px;font-size:12px;color:#000;font-weight:bold">Z3ПВИП</div><div class="a" style="left:1114px;top:814px;width:61px;height:18px;background:#fff"></div><div class="a" style="left:1176px;top:814px;width:80px;height:18px;background:#fff"></div><div class="a" style="left:1118px;top:814px;width:57px;height:18px;overflow:hidden"><div class="t" style="left:0px;top:3.59px;font-size:12px;color:#1e1e1e;">Видимост</div></div><div class="a" style="left:1114px;top:833px;width:61px;height:18px;background:#f0f0f0"></div><div class="a" style="left:1176px;top:833px;width:80px;height:18px;background:#fff"></div><div class="a" style="left:1118px;top:833px;width:57px;height:18px;overflow:hidden"><div class="t" style="left:0px;top:3.59px;font-size:12px;color:#1e1e1e;">Имя</div></div><div class="t" style="left:1179px;top:836.59px;font-size:12px;color:#000;font-weight:bold">ZZPVIP</div><div class="a" style="left:1114px;top:852px;width:61px;height:18px;background:#fff"></div><div class="a" style="left:1176px;top:852px;width:80px;height:18px;background:#fff"></div><div class="a" style="left:1118px;top:852px;width:57px;height:18px;overflow:hidden"><div class="t" style="left:0px;top:3.59px;font-size:12px;color:#1e1e1e;">Коммента</div></div><div class="a" style="left:1114px;top:871px;width:61px;height:18px;background:#fff"></div><div class="a" style="left:1176px;top:871px;width:80px;height:18px;background:#fff"></div><div class="a" style="left:1118px;top:871px;width:57px;height:18px;overflow:hidden"><div class="t" style="left:0px;top:3.59px;font-size:12px;color:#1e1e1e;">Тип данных</div></div><div class="t" style="left:1179px;top:874.59px;font-size:12px;color:#000;font-weight:bold">BOOL</div><div class="a" style="left:1256px;top:662px;width:17px;height:229px;background:linear-gradient(90deg,#e8e8e8,#f2f2f2)"></div><div class="a" style="left:1260px;top:668px;width:0;height:0;border-left:4px solid transparent;border-right:4px solid transparent;border-bottom:4px solid #303030"></div><div class="a" style="left:1257px;top:680px;width:15px;height:145px;border:1px solid #979797;border-radius:2px;background:linear-gradient(90deg,#f5f5f5,#d9d9d9)"></div><div class="a" style="left:1261px;top:749px;width:7px;height:1px;background:#555"></div><div class="a" style="left:1261px;top:752px;width:7px;height:1px;background:#555"></div><div class="a" style="left:1261px;top:755px;width:7px;height:1px;background:#555"></div><div class="a" style="left:1260px;top:881px;width:0;height:0;border-left:4px solid transparent;border-right:4px solid transparent;border-top:4px solid #303030"></div><div class="a" style="left:1092px;top:891px;width:182px;height:5px;background:#f0f0f0;border-top:1px solid #a0a0a0"></div><div class="a" style="left:1092px;top:895px;width:182px;height:60px;background:#dfe3eb;border-top:1px solid #a9b0bb"></div><div class="t" style="left:1098px;top:901.59px;font-size:12px;color:#000;font-weight:bold">Имя</div><div class="t" style="left:1098px;top:918.59px;font-size:12px;color:#1e1e1e;">Имя элемента</div><div class="a" style="left:0px;top:960px;width:1280px;height:25px;background:#293955"></div><div class="t" style="left:4px;top:966.59px;font-size:12px;color:#fff;">Готово</div><div class="a" style="left:0px;top:985px;width:1280px;height:39px;background:linear-gradient(90deg,#1f6a98 0,#2e88bd 100px,#3a90c8 300px,#2b78b8 500px,#2a6db3 700px,#3176ba 900px,#2566ab 1000px,#1f5ea3 1100px,#1c579a 1280px)"></div><div class="a" style="left:0;top:985px;width:1280px;height:39px;overflow:hidden"><div class="a" style="left:1000px;top:-10px;width:10px;height:70px;background:linear-gradient(90deg,rgba(255,255,255,0),rgba(255,255,255,.45),rgba(255,255,255,0));transform:rotate(-38deg)"></div></div><div class="a" style="left:0px;top:985px;width:1280px;height:1px;background:#86b8dc"></div><div class="a" style="left:0px;top:986px;width:1280px;height:18px;background:linear-gradient(rgba(255,255,255,.12),rgba(255,255,255,.03))"></div><svg style="left:0;top:984px" width="120" height="40" viewBox="0 984 120 40"><defs><radialGradient id="orb" cx=".5" cy=".75" r=".7"><stop offset="0" stop-color="#27d4f7"/><stop offset=".45" stop-color="#1673b8"/><stop offset="1" stop-color="#0d3a6e"/></radialGradient><linearGradient id="gl" x1="0" y1="0" x2="0" y2="1"><stop offset="0" stop-color="#fff" stop-opacity=".75"/><stop offset="1" stop-color="#fff" stop-opacity=".1"/></linearGradient><linearGradient id="fold" x1="0" y1="0" x2="0" y2="1"><stop offset="0" stop-color="#fbeeb8"/><stop offset="1" stop-color="#e8c96a"/></linearGradient></defs><circle cx="27" cy="1004.5" r="18" fill="url(#orb)" stroke="#5a8ab8" stroke-width="1"/><ellipse cx="27" cy="997" rx="14" ry="9" fill="url(#gl)"/><path d="M18.5 995 Q22 992 28 994.5 L26.5 1001.5 Q21 999.5 17.5 1002 Z" fill="#f2581e"/><path d="M29.5 995 Q33 997 38 995.5 L36.5 1002.5 Q32 1004 28 1002 Z" fill="#8cc43e"/><path d="M17 1003.5 Q21 1001 26 1003 L24.5 1010 Q19.5 1008 15.5 1010.5 Z" fill="#2a9be6"/><path d="M27.5 1003.5 Q32 1005.5 36 1004 L34.5 1011 Q30 1012.5 26 1010.5 Z" fill="#fbba0a"/><path d="M74.5 994 H82 L83 992 H88 L89 994 H103.5 V1017.5 H74.5 Z" fill="url(#fold)" stroke="#c9a850"/><rect x="77" y="992" width="2" height="2" fill="#20b020"/><rect x="85" y="994" width="2" height="2" fill="#d02020"/><rect x="93" y="996" width="2" height="2" fill="#2090e0"/><path d="M76 1000 H103" stroke="#d8b860"/><path d="M78.5 1018 V1009 Q78.5 1007 81 1007 H97 Q99.5 1007 99.5 1009 V1018 M84 1018 V1012 H94 V1018" fill="#bfe4f8" fill-opacity=".7" stroke="#7ac4ec" stroke-width="1.2"/></svg><svg style="left:130px;top:984px" width="230" height="40" viewBox="130 984 230 40"><defs><radialGradient id="ieg" cx=".4" cy=".35" r=".7"><stop offset="0" stop-color="#9ae0ff"/><stop offset=".5" stop-color="#2a8ad8"/><stop offset="1" stop-color="#0c4a98"/></radialGradient><linearGradient id="npg" x1="0" y1="0" x2="1" y2="1"><stop offset="0" stop-color="#e8f8fc"/><stop offset="1" stop-color="#7ac0d8"/></linearGradient></defs><rect x="137.5" y="993.5" width="25" height="25" fill="#b8dcf2" stroke="#7ab0d8"/><rect x="160" y="995" width="3" height="22" fill="#d8eefa"/><circle cx="148.5" cy="1005.5" r="9" fill="#f07818" stroke="#c85a10"/><path d="M145.5 1000 L154 1005.5 L145.5 1011 Z" fill="#fff"/><circle cx="214" cy="1004" r="11" fill="url(#ieg)"/><path d="M206.5 1004.5 H221 Q221 998 214 998 Q207 998 206.5 1004.5 Q206.5 1011 214 1011 Q218.5 1011 220.5 1008" fill="none" stroke="#e8f6ff" stroke-width="3"/><path d="M201 1016 Q196 1010 210 998 Q224 987 229 991 Q232 995 224 1002" fill="none" stroke="#f2b820" stroke-width="2.4"/><circle cx="275.5" cy="1003.5" r="14" fill="#db4437"/><path d="M275.5 1003.5 L288 996.5 A14 14 0 0 1 275.5 1017.5 Z" fill="#f4c20d"/><path d="M275.5 1003.5 L275.5 1017.5 A14 14 0 0 1 263 996.5 Z" fill="#0f9d58"/><circle cx="275.5" cy="1003.5" r="6.5" fill="#fff"/><circle cx="275.5" cy="1003.5" r="5" fill="#4a8af4"/><path d="M326 994 L345 991 L348 1016 L329 1019 Z" fill="url(#npg)" stroke="#5a9ab0" stroke-width=".8"/><path d="M328 996 L346 993" stroke="#9a9a9a" stroke-width="2" stroke-dasharray="1 1.2"/><path d="M330 1001 L345 999 M330.5 1005 L345.5 1003 M331 1009 L346 1007 M331.5 1013 L346.5 1011" stroke="#a0d0e0" stroke-width=".8"/></svg><div class="a" style="left:370px;top:986px;width:57px;height:36px;background:linear-gradient(rgba(255,255,255,.22),rgba(255,255,255,.05));border:1px solid rgba(255,255,255,.45);border-radius:3px;box-shadow:inset 0 0 0 1px rgba(0,30,60,.25)"></div><div class="a" style="left:432px;top:986px;width:58px;height:36px;background:linear-gradient(rgba(255,255,255,.22),rgba(255,255,255,.05));border:1px solid rgba(255,255,255,.45);border-radius:3px;box-shadow:inset 0 0 0 1px rgba(0,30,60,.25)"></div><div class="a" style="left:494px;top:986px;width:51px;height:36px;background:linear-gradient(rgba(255,255,255,.22),rgba(255,255,255,.05));border:1px solid rgba(255,255,255,.45);border-radius:3px;box-shadow:inset 0 0 0 1px rgba(0,30,60,.25)"></div><div class="a" style="left:556px;top:986px;width:58px;height:36px;background:linear-gradient(rgba(255,255,255,.22),rgba(255,255,255,.05));border:1px solid rgba(255,255,255,.45);border-radius:3px;box-shadow:inset 0 0 0 1px rgba(0,30,60,.25)"></div><div class="a" style="left:618px;top:986px;width:58px;height:36px;background:linear-gradient(rgba(255,255,255,.55),rgba(255,255,255,.3));border:1px solid rgba(255,255,255,.45);border-radius:3px;box-shadow:inset 0 0 0 1px rgba(0,30,60,.25)"></div><div class="a" style="left:546px;top:987px;width:2px;height:34px;background:rgba(255,255,255,.35)"></div><div class="a" style="left:550px;top:987px;width:2px;height:34px;background:rgba(255,255,255,.25)"></div><svg style="left:370px;top:984px" width="310" height="40" viewBox="370 984 310 40"><defs><radialGradient id="dpg" cx=".5" cy=".5" r=".5"><stop offset=".35" stop-color="#b86a30"/><stop offset=".55" stop-color="#e8e0d8"/><stop offset=".8" stop-color="#a8a8a8"/><stop offset="1" stop-color="#707070"/></radialGradient><linearGradient id="pdfg" x1="0" y1="0" x2="0" y2="1"><stop offset="0" stop-color="#e81010"/><stop offset="1" stop-color="#900808"/></linearGradient></defs><path d="M384 989 H409 L413 993 V1018 H384 Z" fill="#2448c8" stroke="#1a2f80"/><rect x="391" y="989.5" width="14" height="8" fill="#e4e6ee"/><rect x="400" y="990.5" width="3" height="6" fill="#2448c8"/><rect x="387.5" y="1002.5" width="22" height="15" fill="#fff"/><path d="M389 1006 H408 M389 1009.5 H408 M389 1013 H408" stroke="#d02030" stroke-width="1.2"/><circle cx="461" cy="1004" r="15" fill="url(#dpg)"/><text x="453" y="1011" font-family="Liberation Sans" font-size="17" font-weight="bold" fill="#f4f0e8" stroke="#8a4a20" stroke-width=".6">D</text><rect x="463" y="1005" width="13" height="13" fill="#777"/><rect x="464" y="1006" width="5" height="5" fill="#e03030"/><rect x="470" y="1006" width="5" height="5" fill="#30a030"/><rect x="464" y="1012" width="5" height="5" fill="#3060e0"/><rect x="470" y="1012" width="5" height="5" fill="#e0b020"/><path d="M504.5 988.5 H527 L531.5 993 V1016.5 H504.5 Z" fill="#f4f8fe" stroke="#4a78c0"/><path d="M506 1008 L531 1004 V1016 H506 Z" fill="#c8dcf4"/><text x="505" y="1008" font-family="Liberation Sans" font-size="17" font-weight="bold" fill="#1a4fb0">W</text><rect x="571" y="989" width="27" height="27" fill="url(#pdfg)"/><path d="M577 1012 Q583 1000 584 993 Q585.5 990 586 994 Q586 1000 591 1006 Q594 1009 589 1008 Q582 1007 576.5 1010 Q574 1012 577 1012 Z" fill="none" stroke="#fff" stroke-width="1.1"/><rect x="631.5" y="988.5" width="32" height="31" rx="2" fill="#40618a" stroke="#2a3e58"/><path d="M635 993 H645 V996 H643 V998 H645 V1001 H635 V998 H637 V996 H635 Z" fill="#f2f2f2"/><path d="M645 997 H651 V1003" stroke="#f2f2f2" fill="none"/><path d="M647 1004 H658 V1007 H656 V1009 H658 V1013 H647 V1009 H649 V1007 H647 Z" fill="#f2f2f2"/></svg><div class="t" style="left:1066px;top:993.59px;font-size:12px;color:#fff;letter-spacing:-0.3px">EN</div><svg style="left:1090px;top:984px" width="100" height="40" viewBox="1090 984 100 40"><path d="M1096.5 1002.5 L1100.5 998.5 L1104.5 1002.5 Z" fill="#fff"/><path d="M1120.5 993 V1011" stroke="#f0f0f0" stroke-width="1.5"/><path d="M1121 993.5 Q1125 992 1128 994 Q1131 995.5 1133.5 994 V1002 Q1131 1003.5 1128 1002 Q1125 1000 1121 1001.5 Z" fill="#f4f4f4" stroke="#6a6a6a" stroke-width=".6"/><circle cx="1130" cy="1006" r="4.3" fill="#d42020" stroke="#fff" stroke-width="1"/><path d="M1128 1004 L1132 1008 M1132 1004 L1128 1008" stroke="#fff" stroke-width="1.2"/><rect x="1145.5" y="994.5" width="7" height="6" fill="#3a6a9a" stroke="#f0f0f0" stroke-width="1.4"/><rect x="1151.5" y="999.5" width="9" height="8" fill="#3a6a9a" stroke="#f0f0f0" stroke-width="1.4"/><path d="M1147 1001 V1006 H1151" stroke="#f0f0f0" fill="none" stroke-width="1.2"/><path d="M1153 1008 V1011 H1159" stroke="#f0f0f0" fill="none" stroke-width="1.2"/><path d="M1168 1000 H1171 L1175 996 V1010 L1171 1006 H1168 Z" fill="#f0f0f0"/><path d="M1177.5 999 Q1179.5 1003 1177.5 1007" stroke="#f0f0f0" fill="none" stroke-width="1.2"/></svg><div class="t" style="left:1215px;top:990.59px;font-size:12px;color:#fff;letter-spacing:-0.4px">15:42</div><div class="t" style="left:1200px;top:1007.09px;font-size:12px;color:#fff;letter-spacing:-0.45px">19.11.2013</div><div class="a" style="left:1266px;top:985px;width:14px;height:39px;background:linear-gradient(90deg,rgba(255,255,255,.12),rgba(255,255,255,.25));border-left:1px solid rgba(255,255,255,.35)"></div>
</body></html>
